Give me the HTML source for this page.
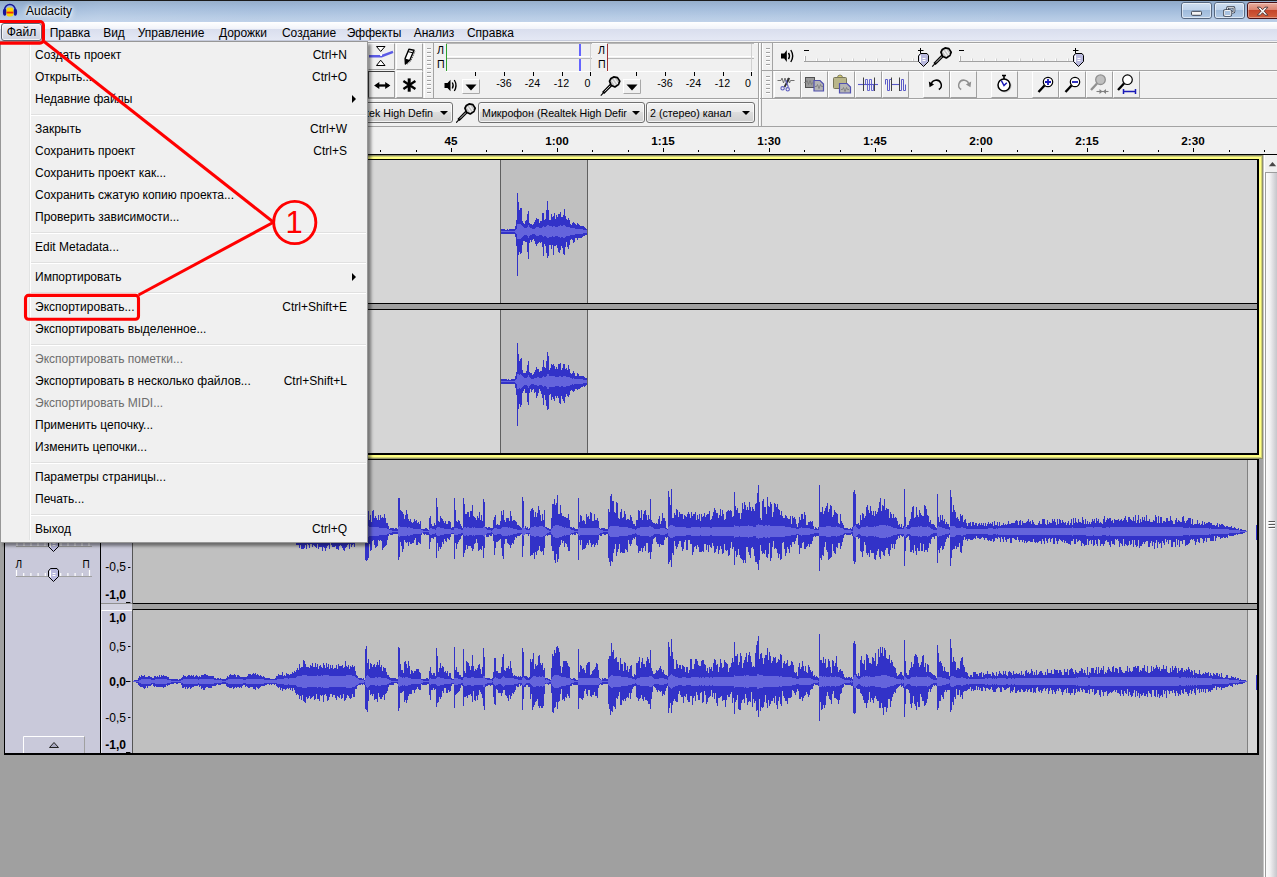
<!DOCTYPE html>
<html lang="ru">
<head>
<meta charset="utf-8">
<title>Audacity</title>
<style>
*{box-sizing:border-box;margin:0;padding:0}
html,body{width:1277px;height:877px;overflow:hidden;background:#a0a0a0}
body{position:relative;font-family:"Liberation Sans",sans-serif;font-size:12px;color:#000}
.abs{position:absolute}
#title{position:absolute;left:0;top:0;width:1277px;height:22px;background:linear-gradient(180deg,#8fa9c8 0,#9cb7d8 30%,#b2c8e3 75%,#bccfe8 100%);border-top:1px solid #1a1a1a}
#title .streak{position:absolute;left:0;top:0;width:1277px;height:21px;background:linear-gradient(100deg,rgba(255,255,255,0) 0,rgba(255,255,255,.0) 3%,rgba(255,255,255,.12) 8%,rgba(255,255,255,.05) 20%,rgba(255,255,255,.08) 40%,rgba(255,255,255,.05) 60%,rgba(255,255,255,.0) 82%,rgba(255,255,255,.0) 100%)}
#title .cap{position:absolute;left:26px;top:3px;font-size:12px;line-height:15px;color:#000;text-shadow:0 0 6px #fff,0 0 6px #fff,0 0 3px #fff}
#menubar{position:absolute;left:0;top:22px;width:1277px;height:20px;background:linear-gradient(180deg,#ffffff 0,#f1f3f9 36%,#d9deee 37%,#e4e8f4 94.500%,#c6cbdc 95%,#c6cbdc 100%);border-bottom:1px solid #f3f3f3}
#menubar span{position:absolute;top:2.500px;height:17px;line-height:16px;text-align:center;font-size:12px;white-space:nowrap}
#menubar span.sel{border:1px solid #5e6573;border-radius:3px;background:linear-gradient(180deg,#f0f1f6 0,#dadde8 50%,#cdd1de 100%);box-shadow:inset 0 0 0 1px rgba(255,255,255,.7)}
#tb{position:absolute;left:0;top:42px;width:1277px;height:85px;background:#f0f0f0}
.hl{position:absolute;left:0;width:1277px;height:2px;background:linear-gradient(180deg,#a3a3a3 0,#a3a3a3 50%,#fafafa 50%,#fafafa 100%)}
.vl{position:absolute;width:1px;background:#a3a3a3}
.btn{position:absolute;width:27px;height:27px;background:#f0f0f0;border-top:1px solid #fff;border-left:1px solid #fff;border-right:1px solid #a0a0a0;border-bottom:1px solid #a0a0a0}
.btn svg{position:absolute;left:-1px;top:-1px}
.btn.t svg{left:-2px;top:-1px}
.grab{position:absolute;width:10px;background:#f0f0f0;border-left:1px solid #fff;border-right:1px solid #a3a3a3}
.grab i{position:absolute;left:2px;top:5px;width:4px;bottom:3px;background:repeating-linear-gradient(180deg,#a0a0a0 0,#a0a0a0 1px,#fff 1px,#fff 2px,#f0f0f0 2px,#f0f0f0 4px)}
.combo{position:absolute;top:102px;height:21px;border:1px solid #707070;border-radius:3px;background:linear-gradient(180deg,#f2f2f2 0,#ebebeb 45%,#dddddd 50%,#cfcfcf 100%);font-size:10.67px;line-height:20px;white-space:nowrap;overflow:hidden;padding-left:3px;box-shadow:inset 0 0 0 1px rgba(255,255,255,.75)}
.combo i{position:absolute;right:4px;top:8px;width:0;height:0;border-left:4px solid transparent;border-right:4px solid transparent;border-top:4.500px solid #000}
.mlab{position:absolute;font-size:10.67px;line-height:12px;white-space:nowrap}
.mbar{position:absolute;height:14px;background:#f0f0f0;border-top:1px solid #b8b8b8;border-bottom:1px solid #fff}
#ruler{position:absolute;left:0;top:127px;width:1277px;height:27px;background:#f0f0f0}
#ruler span{position:absolute;top:6.800px;width:40px;margin-left:-20px;text-align:center;font-weight:bold;font-size:11.700px;line-height:13px}
#menu{position:absolute;left:0;top:41px;width:368px;height:502px;background:#f0f0f0;border:1px solid #979797;box-shadow:3px 3px 3px rgba(0,0,0,.45)}
#menu .gut{position:absolute;left:28px;top:2px;width:2px;height:496px;border-left:1px solid #e2e3e3;border-right:1px solid #fff}
#menu .it{position:absolute;left:34px;height:22px;line-height:23px;font-size:12px;white-space:nowrap}
#menu .sc{position:absolute;right:20px;height:22px;line-height:23px;font-size:12px;white-space:nowrap;text-align:right}
#menu .dis{color:#6d6d6d}
#menu .sep{position:absolute;left:30px;width:335px;height:2px;border-top:1px solid #e0e0e0;border-bottom:1px solid #fff}
#menu .arr{position:absolute;left:351px;width:0;height:0;border-top:4px solid transparent;border-bottom:4px solid transparent;border-left:4px solid #000}
.vr{position:absolute;font-size:12px;line-height:12px;width:26px;text-align:right;white-space:nowrap}
.vr.b{font-weight:bold}
</style>
</head>
<body>
<svg width="0" height="0" style="position:absolute"><defs>
<g id="mic">
<path d="M0.200 19.700 L3.200 16.400" stroke="#000" stroke-width="1.100"/>
<path d="M2.500 17 L10.800 8.700" stroke="#000" stroke-width="3.100"/>
<path d="M3.900 15.600 L10.300 9.200" stroke="#e4e4e4" stroke-width=".9"/>
<path d="M10.300 2.500 L13.100 0.900 L16.900 1.600 L19.200 5.100 L17.800 8.600 L14.300 11 L10.500 9.300 L8.900 5.100z" fill="#c4c4c4" stroke="#000" stroke-width="1.700" stroke-linejoin="round"/>
<path d="M11.300 4 L14.800 9.200 M13.600 2.600 L17.200 7.900" stroke="#f2f2f2" stroke-width="1.300"/>
</g>
<g id="thumb">
<path d="M0.500 3 L2.500 0.500 H9 L10.500 2.500 V8.500 L5.500 13.500 L0.500 8.500z" fill="#b9b9de" stroke="#000" stroke-width="1"/>
<path d="M1.500 3.200 L3 1.500 V10 L1.500 8.300z" fill="#fff"/>
<path d="M4.500 5.500 h3 M4.500 7.500 h3" stroke="#fff" stroke-width="1"/>
</g>
</defs></svg>
<!-- title bar -->
<div id="title"><div class="streak"></div>
<svg class="abs" style="left:0;top:-1px" width="22" height="22" viewBox="0 0 22 22">
<path d="M4.600 11 V9.700 a5.300 5.300 0 0 1 10.600 0 V11" fill="none" stroke="#15159a" stroke-width="1.500"/>
<ellipse cx="4.700" cy="12.100" rx="1.800" ry="3.700" fill="#15159a"/>
<ellipse cx="15.300" cy="12.100" rx="1.800" ry="3.700" fill="#15159a"/>
<rect x="6.600" y="7.400" width="6.700" height="9" rx="2.200" fill="#fdd400"/>
<rect x="6.600" y="11.200" width="6.700" height="2.700" fill="#f79a00"/>
<rect x="6.600" y="11.900" width="6.700" height="1.300" fill="#f02a10"/>
</svg>
<div class="cap">Audacity</div>
<!-- window buttons -->
<svg class="abs" style="left:1180px;top:0" width="97" height="21" viewBox="0 0 97 21">
<defs>
<linearGradient id="gb" x1="0" y1="0" x2="0" y2="1"><stop offset="0" stop-color="#cfdff1"/><stop offset=".48" stop-color="#bdd1e9"/><stop offset=".5" stop-color="#9fbbdb"/><stop offset="1" stop-color="#b4cbe6"/></linearGradient>
<linearGradient id="gr" x1="0" y1="0" x2="0" y2="1"><stop offset="0" stop-color="#e9b0a2"/><stop offset=".48" stop-color="#d9816c"/><stop offset=".5" stop-color="#c4452a"/><stop offset="1" stop-color="#d2623f"/></linearGradient>
</defs>
<rect x="1.5" y="1.5" width="30" height="16" rx="2.5" fill="url(#gb)" stroke="#56677f"/>
<rect x="2.5" y="2.5" width="28" height="14" rx="1.5" fill="none" stroke="rgba(255,255,255,.55)"/>
<rect x="34.5" y="1.5" width="30" height="16" rx="2.5" fill="url(#gb)" stroke="#56677f"/>
<rect x="35.5" y="2.5" width="28" height="14" rx="1.5" fill="none" stroke="rgba(255,255,255,.55)"/>
<rect x="67.5" y="1.5" width="40" height="16" rx="2.5" fill="url(#gr)" stroke="#4a1216"/>
<rect x="68.5" y="2.5" width="38" height="14" rx="1.5" fill="none" stroke="rgba(255,255,255,.35)"/>
<rect x="11.500" y="10.300" width="10" height="4" rx="1" fill="#f4f4f4" stroke="#3a4250" stroke-width="1"/>
<rect x="47.500" y="6.300" width="6.500" height="5" rx=".8" fill="none" stroke="#3a4250" stroke-width="2.6"/>
<rect x="47.500" y="6.300" width="6.500" height="5" rx=".8" fill="none" stroke="#f4f4f4" stroke-width="1"/>
<rect x="44.300" y="9.500" width="6.500" height="5" rx=".8" fill="#a9c2df" stroke="#3a4250" stroke-width="2.6"/>
<rect x="44.300" y="9.500" width="6.500" height="5" rx=".8" fill="#a9c2df" stroke="#f4f4f4" stroke-width="1"/>
<path d="M77.300 6.200 l3 0 l2.300 2.500 l2.300 -2.500 l3 0 l-3.700 4 l3.700 4 l-3 0 l-2.300 -2.500 l-2.300 2.500 l-3 0 l3.700 -4z" fill="#f6f6f6" stroke="#4a3030" stroke-width=".9"/>
</svg>
</div>
<!-- menubar -->
<div id="menubar">
<span class="sel" style="left:1px;width:41px;top:1px;height:18px">Файл</span>
<span style="left:45px;width:50px">Правка</span>
<span style="left:98px;width:32px">Вид</span>
<span style="left:131px;width:80px">Управление</span>
<span style="left:211px;width:64px">Дорожки</span>
<span style="left:276px;width:66px">Создание</span>
<span style="left:342px;width:64px">Эффекты</span>
<span style="left:407px;width:54px">Анализ</span>
<span style="left:461px;width:59px">Справка</span>
</div>
<!-- toolbars background -->
<div id="tb"></div>
<div class="hl" style="top:42px"></div>
<div class="hl" style="top:70px;left:762px;width:515px"></div>
<div class="hl" style="top:98px"></div>
<div class="hl" style="top:126px"></div>
<div class="vl" style="left:422px;top:43px;height:55px"></div>
<div class="vl" style="left:758px;top:43px;height:83px"></div>
<div class="vl" style="left:759px;top:43px;height:83px;background:#fff"></div>
<div class="vl" style="left:761px;top:43px;height:83px"></div>
<!-- tools toolbar buttons -->
<div class="btn t" style="left:368px;top:43px"><svg width="27" height="27" viewBox="0 0 27 27">
<path d="M9.500 3.500 H18 L13.700 8.500z M9.500 22.500 H18 L13.700 17.200z" fill="#fff" stroke="#000" stroke-width="1"/>
<path d="M2 13.200 H14.500 L26 8.800" fill="none" stroke="#5a5ae6" stroke-width="2.500"/>
<rect x="13.100" y="11" width="1.900" height="1.900" fill="#fff"/></svg></div>
<div class="btn t" style="left:396px;top:43px"><svg width="27" height="27" viewBox="0 0 27 27">
<path d="M19.900 8.600 L15.800 18 L11.600 21.600" fill="none" stroke="#444" stroke-width="1" stroke-dasharray="1 1"/>
<path d="M13.900 6.200 L19 7.300 L14.900 16.900 L10.400 21 L10.100 15.500z" fill="#fff" stroke="#000" stroke-width="1.400" stroke-linejoin="round"/>
<path d="M10.100 15.500 L14.900 16.900 L10.400 21z" fill="#000"/>
<path d="M12.900 8.600 L17.900 9.800" stroke="#000" stroke-width="1"/></svg></div>
<div class="btn t" style="left:368px;top:71px;border-top-color:#404040;border-left-color:#404040"><svg width="27" height="27" viewBox="0 0 27 27">
<path d="M9 14.500 H21.500" stroke="#000" stroke-width="2.300"/><path d="M7.100 14.500 l5.200 -3.500 v7z M23.400 14.500 l-5.200 -3.500 v7z" fill="#000"/></svg></div>
<div class="btn t" style="left:396px;top:71px"><svg width="27" height="27" viewBox="0 0 27 27">
<path d="M14.200 7.400 V20.700" stroke="#000" stroke-width="3"/><path d="M8.400 10.100 L20.400 18 M20.400 10.100 L8.400 18" stroke="#000" stroke-width="2.400" fill="none"/></svg></div>
<!-- meter toolbar -->
<div class="grab" style="left:424px;top:43px;height:55px"><i style="left:2px"></i></div>
<div class="mlab" style="left:437px;top:44px">Л</div>
<div class="mlab" style="left:437px;top:58px">П</div>
<div class="mbar" style="left:446px;top:43px;width:146px"></div>
<div class="mbar" style="left:446px;top:58px;width:146px"></div>
<div class="abs" style="left:446px;top:44px;width:1px;height:27px;background:#2ca02c"></div>
<div class="abs" style="left:579px;top:44px;width:2px;height:12px;background:#6464ff"></div>
<div class="abs" style="left:579px;top:59px;width:2px;height:12px;background:#6464ff"></div>
<div class="abs" style="left:590px;top:44px;width:1px;height:27px;background:#d0d0d0"></div>
<svg class="abs" style="left:440px;top:72px" width="320" height="26" viewBox="0 0 320 26">
<g stroke="#000" stroke-width="1"><path d="M35.500 0v4M64.500 0v4M93.500 0v4M122.500 0v4M150.500 0v4"/>
<path d="M196.500 0v4M225.500 0v4M254.500 0v4M283.500 0v4M311.500 0v4"/></g>
<g font-family="Liberation Sans, sans-serif" font-size="10.670" fill="#000" text-anchor="middle">
<text x="64" y="15">-36</text><text x="92.500" y="15">-24</text><text x="121.500" y="15">-12</text><text x="147.500" y="15">0</text>
<text x="225" y="15">-36</text><text x="253.500" y="15">-24</text><text x="282.500" y="15">-12</text><text x="308" y="15">0</text></g>
<!-- speaker -->
<path d="M4.500 11 h3 l3 -3.300 v11.600 l-3 -3.300 h-3z" fill="#000"/>
<path d="M12.300 10.500 q1.800 3 0 6 M14.300 8 q3.400 5.500 0 11" fill="none" stroke="#000" stroke-width="1.300"/>
<!-- dropdown btn -->
<rect x="22.500" y="7.500" width="17" height="14" fill="#f0f0f0" stroke="#fff"/><path d="M22.500 21.500 h17 v-14" fill="none" stroke="#a8a8a8"/>
<path d="M25.500 12.500 h11 l-5.500 6z" fill="#000"/>
<rect x="183.500" y="7.500" width="17" height="14" fill="#f0f0f0" stroke="#fff"/><path d="M183.500 21.500 h17 v-14" fill="none" stroke="#a8a8a8"/>
<path d="M186.500 12.500 h11 l-5.500 6z" fill="#000"/>
<!-- mic icon -->
<g transform="translate(160.600,4)"><use href="#mic"/></g>
</svg>
<div class="mlab" style="left:598px;top:44px">Л</div>
<div class="mlab" style="left:598px;top:58px">П</div>
<div class="mbar" style="left:607px;top:43px;width:147px"></div>
<div class="mbar" style="left:607px;top:58px;width:147px"></div>
<div class="abs" style="left:607px;top:44px;width:1px;height:27px;background:#a03030"></div>
<div class="abs" style="left:751px;top:44px;width:1px;height:27px;background:#d0d0d0"></div>
<!-- mixer toolbar -->
<div class="grab" style="left:762px;top:43px;height:27px;width:11px"><i style="left:3px"></i></div>
<svg class="abs" style="left:775px;top:43px" width="320" height="27" viewBox="0 0 320 27">
<path d="M6 10.500 h3.200 l2.600 -3.600 v12.200 l-2.600 -3.600 h-3.200z" fill="#000"/>
<path d="M13.500 9.800 q2 3.200 0 6.400 M15.800 7 q3.800 6 0 12" fill="none" stroke="#000" stroke-width="1.400"/>
<path d="M29 7.500 h5" stroke="#000"/>
<path d="M143 7.500 h5.500 M145.500 5 v5.500" stroke="#000"/>
<path d="M29 18.500 h118" stroke="#a0a0a0"/>
<path d="M29.500 13 v5" stroke="#fff"/><path d="M30.500 13 v5" stroke="#b0b0b0"/>
<g stroke="#fff"><path d="M41.500 15.500v2.500M53.500 15.500v2.500M65.500 15.500v2.500M77.500 15.500v2.500M89.500 15.500v2.500M101.500 15.500v2.500M113.500 15.500v2.500M125.500 15.500v2.500M137.500 15.500v2.500"/></g>
<g stroke="#d0d0d0"><path d="M42.500 15.500v2.500M54.500 15.500v2.500M66.500 15.500v2.500M78.500 15.500v2.500M90.500 15.500v2.500M102.500 15.500v2.500M114.500 15.500v2.500M126.500 15.500v2.500M138.500 15.500v2.500"/></g>
<use href="#thumb" x="143" y="10"/>
<g transform="translate(157,4)"><use href="#mic"/></g>
<path d="M184 7.500 h5" stroke="#000"/>
<path d="M298 7.500 h5.500 M300.500 5 v5.500" stroke="#000"/>
<path d="M184 18.500 h118" stroke="#a0a0a0"/>
<path d="M184.500 13 v5" stroke="#fff"/><path d="M185.500 13 v5" stroke="#b0b0b0"/>
<g stroke="#fff"><path d="M196.500 15.500v2.500M208.500 15.500v2.500M220.500 15.500v2.500M232.500 15.500v2.500M244.500 15.500v2.500M256.500 15.500v2.500M268.500 15.500v2.500M280.500 15.500v2.500M292.500 15.500v2.500"/></g>
<g stroke="#d0d0d0"><path d="M197.500 15.500v2.500M209.500 15.500v2.500M221.500 15.500v2.500M233.500 15.500v2.500M245.500 15.500v2.500M257.500 15.500v2.500M269.500 15.500v2.500M281.500 15.500v2.500M293.500 15.500v2.500"/></g>
<use href="#thumb" x="298" y="10"/>
</svg>
<!-- edit toolbar -->
<div class="grab" style="left:762px;top:71px;height:27px;width:11px"><i style="left:3px"></i></div>
<!-- edit toolbar buttons -->
<div class="btn" style="left:774px;top:71px"><svg width="27" height="27" viewBox="0 0 27 27">
<path d="M3.500 9.500 h3.500 l1 -2.500 l1.500 5 l1.500 -5 l1.500 5 l1.500 -5 l1.500 5 l1 -2.500 h4" fill="none" stroke="#707070" stroke-width="1"/>
<path d="M15.300 7 l-4.800 9" stroke="#303030" stroke-width="1.800"/><path d="M11.800 9 l2.500 7" stroke="#6060c0" stroke-width="1.100"/>
<circle cx="8.600" cy="17.300" r="1.700" fill="#f0f0f0" stroke="#6060c0" stroke-width="1.100"/>
<circle cx="13.700" cy="18.300" r="1.700" fill="#f0f0f0" stroke="#6060c0" stroke-width="1.100"/></svg></div>
<div class="btn" style="left:801px;top:71px"><svg width="27" height="27" viewBox="0 0 27 27">
<rect x="4.500" y="6.500" width="9" height="10" fill="#9a9a9a" stroke="#505050"/>
<path d="M3 11.500 h2 l1 -2 l1.500 4 l1.500 -4 l1.500 4 l1 -2" fill="none" stroke="#777" stroke-width=".8"/>
<path d="M13 9.500 h6 l3.500 3.500 v7 h-9.500z" fill="#b4b4b4" stroke="#5050b0" stroke-width="1.200"/>
<path d="M14 15.500 h1.500 l1 -2 l1.500 4 l1.500 -4 l1 2 h1.500" fill="none" stroke="#777" stroke-width=".8"/></svg></div>
<div class="btn" style="left:828px;top:71px"><svg width="27" height="27" viewBox="0 0 27 27">
<rect x="5.500" y="6.500" width="13" height="11" rx="1" fill="#b9b68a" stroke="#77755a"/>
<path d="M9.500 6.500 q0 -2.500 2.500 -2.500 q2.500 0 2.500 2.500z" fill="#d8cf70" stroke="#77755a" stroke-width=".9"/>
<path d="M11.500 12.500 h7.500 l3.500 3.500 v6 h-11z" fill="#b4b4b4" stroke="#5050b0" stroke-width="1.200"/>
<path d="M13 18.500 h1.500 l1 -2 l1.500 4 l1.500 -4 l1 2 h1.500" fill="none" stroke="#777" stroke-width=".8"/></svg></div>
<div class="btn" style="left:855px;top:71px"><svg width="27" height="27" viewBox="0 0 27 27">
<path d="M3 13.500 H23" stroke="#5a5ac8" stroke-width="1.100"/>
<path d="M8.500 13.500 H10.500 V8.500 H12.500 V19.500 H14.500 V8.500 H16.500 V19.500 H18.500 V13.500" fill="none" stroke="#5a5ac8" stroke-width=".9"/>
<path d="M8.500 6.500 v13.500 M19.500 6.500 v13.500" stroke="#404040" stroke-width="1"/></svg></div>
<div class="btn" style="left:882px;top:71px"><svg width="27" height="27" viewBox="0 0 27 27">
<path d="M9.500 13.500 H17.500" stroke="#5a5ac8" stroke-width="1.100"/>
<path d="M3.500 13.500 V8.500 H5.500 V19.500 H7.500 V8.500 H9.500 M17.500 19.500 H19.500 V8.500 H21.500 V19.500 H23.500 V13.500" fill="none" stroke="#5a5ac8" stroke-width="1"/>
<path d="M9.500 6.500 v13.500 M17.500 6.500 v13.500" stroke="#404040" stroke-width="1"/></svg></div>
<div class="btn" style="left:923px;top:71px"><svg width="27" height="27" viewBox="0 0 27 27">
<path d="M8.300 14.200 a5 5 0 1 1 7.500 4.300" fill="none" stroke="#000" stroke-width="1.500"/>
<path d="M5.800 10.600 l0.700 5.600 l4.600 -2.800z" fill="#000"/></svg></div>
<div class="btn" style="left:950px;top:71px"><svg width="27" height="27" viewBox="0 0 27 27">
<path d="M18.700 14.200 a5 5 0 1 0 -7.500 4.300" fill="none" stroke="#909090" stroke-width="1.500"/>
<path d="M21.200 10.600 l-0.700 5.600 l-4.600 -2.800z" fill="#909090"/></svg></div>
<div class="btn" style="left:991px;top:71px"><svg width="27" height="27" viewBox="0 0 27 27">
<circle cx="14" cy="15" r="6.500" fill="#999" opacity=".5"/>
<circle cx="13" cy="14" r="6" fill="#fff" stroke="#000" stroke-width="1.500"/>
<path d="M11 4.500 h4 M13 4.500 v3.500" stroke="#000" stroke-width="1.600"/>
<path d="M10.300 9.500 l2.700 5 l2.800 -2.800" fill="none" stroke="#1a1ab8" stroke-width="1.500"/></svg></div>
<div class="btn" style="left:1032px;top:71px"><svg width="27" height="27" viewBox="0 0 27 27">
<path d="M12.500 14.500 l-6 6.500" stroke="#000" stroke-width="2.400"/>
<circle cx="16" cy="11" r="4.700" fill="#fff" stroke="#000" stroke-width="1.200"/>
<path d="M13 11 h6 M16 8 v6" stroke="#1a1ab8" stroke-width="1.800"/></svg></div>
<div class="btn" style="left:1059px;top:71px"><svg width="27" height="27" viewBox="0 0 27 27">
<path d="M12.500 14.500 l-6 6.500" stroke="#000" stroke-width="2.400"/>
<circle cx="16" cy="11" r="4.700" fill="#fff" stroke="#000" stroke-width="1.200"/>
<path d="M13 11 h6" stroke="#1a1ab8" stroke-width="1.800"/></svg></div>
<div class="btn" style="left:1086px;top:71px"><svg width="27" height="27" viewBox="0 0 27 27">
<path d="M11 12.500 l-6 6.500" stroke="#909090" stroke-width="2.400"/>
<circle cx="14.500" cy="8.700" r="4.800" fill="#c0c0c0" stroke="#909090" stroke-width="1.300"/>
<path d="M10.500 20.500 h12" stroke="#808080" stroke-width="1.100"/><path d="M16.500 20.500 l-3 -2.500 v5z M17 20.500 l3 -2.500 v5z" fill="#808080"/></svg></div>
<div class="btn" style="left:1113px;top:71px"><svg width="27" height="27" viewBox="0 0 27 27">
<path d="M11 12.500 l-6 6.500" stroke="#000" stroke-width="2.400"/>
<circle cx="14.500" cy="8.700" r="4.800" fill="#fff" stroke="#000" stroke-width="1.200"/>
<path d="M10.500 20.500 h12 M10.500 18 v5 M22.500 18 v5" stroke="#1a1ab8" stroke-width="1.500" fill="none"/></svg></div>
<!-- device toolbar -->
<div class="combo" style="left:300px;width:153px"><span style="position:absolute;right:19px;top:0">Динамики (Realtek High Defin</span><i></i></div>
<svg class="abs" style="left:455.700px;top:103.300px" width="20" height="20" viewBox="0 0 20 20"><use href="#mic"/></svg>
<div class="combo" style="left:478px;width:167px">Микрофон (Realtek High Defir<i></i></div>
<div class="combo" style="left:646px;width:109px">2 (стерео) канал<i></i></div>
<div id="ruler">
<svg class="abs" style="left:0;top:0" width="1277" height="27" viewBox="0 0 1277 27"><path d="
M133.5 21v4M168.5 23v2M203.5 23v2M239.5 21v4M274.5 23v2M310.5 23v2M345.5 21v4M380.5 23v2M416.5 23v2M451.5 21v4M486.5 23v2M522.5 23v2M557.5 21v4M592.5 23v2M628.5 23v2M663.5 21v4M698.5 23v2M734.5 23v2M769.5 21v4M804.5 23v2M840.5 23v2M875.5 21v4M911.5 23v2M946.5 23v2M981.5 21v4M1017.5 23v2M1052.5 23v2M1087.5 21v4M1123.5 23v2M1158.5 23v2M1193.5 21v4M1229.5 23v2M1264.5 23v2
" stroke="#000" stroke-width="1" fill="none"/></svg>
<span style="left:133px">0</span>
<span style="left:239px">15</span>
<span style="left:345px">30</span>
<span style="left:451px">45</span>
<span style="left:557px">1:00</span>
<span style="left:663px">1:15</span>
<span style="left:769px">1:30</span>
<span style="left:875px">1:45</span>
<span style="left:981px">2:00</span>
<span style="left:1087px">2:15</span>
<span style="left:1193px">2:30</span>
</div>
<!-- ruler bottom line -->
<div class="abs" style="left:0;top:153.700px;width:1277px;height:1.300px;background:#000"></div>
<div class="abs" style="left:0;top:127px;width:5px;height:26px;background:#f0f0f0"></div>
<!-- track 1 focus border (yellow) -->
<div class="abs" style="left:1px;top:155px;width:1262px;height:304px;background:#90906c"></div>
<div class="abs" style="left:2px;top:156px;width:1260px;height:302px;background:#cfcf74"></div>
<div class="abs" style="left:3px;top:157px;width:1258px;height:299.500px;background:#ffff84"></div>
<!-- track 1 -->
<div class="abs" style="left:4px;top:159px;width:1255px;height:296px;background:#000"></div>
<div class="abs" style="left:5px;top:160px;width:95px;height:293px;background:#c9c9da"></div>
<div class="abs" style="left:101px;top:160px;width:31px;height:293px;background:#c9c9da"></div>
<div class="abs" style="left:132px;top:160px;width:1px;height:293px;background:#787878"></div>
<div class="abs" style="left:133px;top:160px;width:1124px;height:143px;background:#d6d6d6"></div>
<div class="abs" style="left:133px;top:310px;width:1124px;height:143px;background:#d6d6d6"></div>
<div class="abs" style="left:101px;top:304px;width:1156px;height:5px;background:#a0a0a0"></div>
<div class="abs" style="left:500px;top:160px;width:88px;height:143px;background:#c0c0c0;border-left:1px solid #606060;border-right:1px solid #606060"></div>
<div class="abs" style="left:500px;top:310px;width:88px;height:143px;background:#c0c0c0;border-left:1px solid #606060;border-right:1px solid #606060"></div>
<!-- track 2 -->
<div class="abs" style="left:4px;top:459px;width:1255px;height:296px;background:#000"></div>
<div class="abs" style="left:5px;top:460px;width:95px;height:293px;background:#c9c9da"></div>
<div class="abs" style="left:101px;top:460px;width:31px;height:143px;background:#c9c9da"></div>
<div class="abs" style="left:101px;top:603px;width:31px;height:7px;background:#d2d2e0;border-top:1px solid #909090"></div>
<div class="abs" style="left:101px;top:610px;width:31px;height:143px;background:#c9c9da;border-top:1px solid #fff;border-left:1px solid #e8e8f0"></div>
<div class="abs" style="left:132px;top:460px;width:1px;height:293px;background:#555"></div>
<div class="abs" style="left:133px;top:460px;width:1124px;height:143px;background:#c0c0c0"></div>
<div class="abs" style="left:133px;top:610px;width:1124px;height:143px;background:#c0c0c0"></div>
<div class="abs" style="left:132px;top:604px;width:1125px;height:5px;background:#a0a0a0"></div>
<div class="abs" style="left:1247px;top:460px;width:10px;height:143px;background:#d6d6d6;border-left:1px solid #808080"></div>
<div class="abs" style="left:1247px;top:610px;width:10px;height:143px;background:#d6d6d6;border-left:1px solid #808080"></div>
<div class="abs" style="left:1256px;top:525px;width:1px;height:15px;background:#3232c8"></div>
<div class="abs" style="left:1256px;top:675px;width:1px;height:15px;background:#3232c8"></div>
<!-- vruler labels -->
<div class="vr" style="left:100px;top:561px">-0,5</div>
<div class="vr b" style="left:100px;top:589px">-1,0</div>
<div class="vr b" style="left:100px;top:612px">1,0</div>
<div class="vr" style="left:100px;top:641px">0,5</div>
<div class="vr b" style="left:100px;top:676px">0,0</div>
<div class="vr" style="left:100px;top:712px">-0,5</div>
<div class="vr b" style="left:100px;top:739px">-1,0</div>
<svg class="abs" style="left:101px;top:460px" width="32" height="294" viewBox="0 0 32 294"><path d="M27 107.500h2.400 M25 142.500h4.400 M27 186.500h2.400 M25 221.500h4.400 M27 257.500h2.400 M25 292.500h4.400" stroke="#000" stroke-width="1"/></svg>
<!-- track 2 panel controls -->
<svg class="abs" style="left:5px;top:540px" width="95" height="214" viewBox="0 0 95 214">
<g font-family="Liberation Sans, sans-serif" font-size="10" fill="#000"><text x="10.500" y="28">Л</text><text x="77.500" y="28">П</text></g>
<path d="M11 6.500h76 M11 36.500h76" stroke="#a0a0a0"/>
<g stroke="#fff" stroke-width="1.200"><path d="M11.500 30v6M18.700 33v3M25.900 33v3M33.100 33v3M40.300 33v3M55.700 33v3M62.900 33v3M70.100 33v3M77.300 33v3M84.500 30v6"/>
<path d="M12 3v3M19 3v3M26 3v3M33 3v3M40 3v3M56 3v3M63 3v3M70 3v3M77 3v3M84 3v3"/></g>
<use href="#thumb" x="43" y="-2"/>
<use href="#thumb" x="43" y="28"/>
<path d="M18.500 213 V196.500 H79.500" fill="none" stroke="#fff"/>
<path d="M79.500 196.500 V213" stroke="#a0a0a0"/>
<path d="M44.500 207.500 h9 l-4.500 -5z" fill="#a8a8c0" stroke="#202020" stroke-width="1"/>
</svg>
<svg class="abs" style="left:0;top:154px" width="1277" height="723" viewBox="0 154 1277 723" shape-rendering="crispEdges">
<path d="M501 229V229H502V229H503V229H504V229H505V230H506V230H507V229H508V230H509V229H510V229H511V229H512V229H513V229H514V229H515V226H516V220H517V193H518V202H519V210H520V208H521V208H522V221H523V223H524V224H525V221H526V220H527V214H528V211H529V223H530V224H531V224H532V225H533V224H534V222H535V220H536V218H537V219H538V219H539V223H540V221H541V221H542V213H543V213H544V220H545V219H546V210H547V201H548V210H549V220H550V220H551V214H552V217H553V216H554V213H555V219H556V215H557V217H558V214H559V214H560V212H561V217H562V217H563V215H564V209H565V216H566V219H567V220H568V218H569V220H570V224H571V225H572V223H573V222H574V223H575V224H576V225H577V223H578V224H579V225H580V226H581V226H582V226H583V226H584V227H585V228H586V229H587V235H586V235H585V236H584V236H583V237H582V238H581V238H580V238H579V238H578V240H577V238H576V238H575V242H574V243H573V240H572V239H571V240H570V245H569V249H568V247H567V242H566V247H565V255H564V254H563V248H562V246H561V250H560V253H559V252H558V248H557V245H556V246H555V246H554V255H553V245H552V249H551V245H550V245H549V256H548V258H547V253H546V246H545V244H544V256H543V247H542V242H541V243H540V242H539V243H538V244H537V246H536V244H535V241H534V239H533V240H532V242H531V240H530V243H529V259H528V252H527V242H526V242H525V241H524V241H523V245H522V253H521V254H520V252H519V255H518V276H517V246H516V237H515V234H514V234H513V234H512V234H511V234H510V234H509V234H508V234H507V234H506V234H505V234H504V234H503V234H502V234H501Z" fill="#3232c8"/><path d="M501 231V231H502V231H503V231H504V231H505V231H506V231H507V231H508V231H509V231H510V231H511V231H512V231H513V231H514V231H515V230H516V229H517V224H518V224H519V224H520V224H521V225H522V226H523V227H524V228H525V228H526V228H527V227H528V225H529V227H530V228H531V228H532V229H533V229H534V229H535V228H536V227H537V227H538V227H539V228H540V228H541V228H542V227H543V226H544V227H545V227H546V226H547V225H548V225H549V226H550V226H551V226H552V227H553V226H554V226H555V227H556V227H557V227H558V226H559V226H560V225H561V226H562V226H563V225H564V225H565V226H566V227H567V227H568V227H569V227H570V228H571V228H572V228H573V228H574V228H575V229H576V229H577V229H578V229H579V229H580V229H581V229H582V229H583V230H584V230H585V230H586V230H587V233H586V233H585V233H584V233H583V234H582V234H581V234H580V234H579V234H578V234H577V234H576V234H575V235H574V235H573V235H572V235H571V235H570V236H569V236H568V236H567V236H566V237H565V238H564V238H563V237H562V237H561V238H560V237H559V237H558V236H557V236H556V236H555V237H554V237H553V236H552V237H551V237H550V237H549V238H548V238H547V237H546V236H545V236H544V237H543V236H542V235H541V235H540V235H539V236H538V236H537V236H536V235H535V234H534V234H533V234H532V235H531V235H530V236H529V238H528V236H527V235H526V235H525V235H524V236H523V237H522V238H521V239H520V239H519V239H518V239H517V234H516V233H515V232H514V232H513V232H512V232H511V232H510V232H509V232H508V232H507V232H506V232H505V232H504V232H503V232H502V232H501Z" fill="#6464dc"/>
<path d="M501 379V379H502V379H503V379H504V379H505V379H506V379H507V380H508V379H509V380H510V380H511V379H512V379H513V379H514V379H515V376H516V372H517V343H518V354H519V361H520V359H521V358H522V370H523V373H524V373H525V373H526V371H527V365H528V361H529V372H530V373H531V373H532V375H533V374H534V372H535V370H536V367H537V369H538V369H539V372H540V371H541V371H542V367H543V360H544V367H545V368H546V361H547V352H548V356H549V370H550V368H551V364H552V365H553V364H554V366H555V369H556V367H557V369H558V364H559V364H560V363H561V370H562V368H563V364H564V364H565V369H566V368H567V370H568V365H569V369H570V373H571V374H572V373H573V371H574V373H575V376H576V376H577V373H578V374H579V376H580V376H581V376H582V376H583V376H584V377H585V378H586V378H587V385H586V386H585V387H584V386H583V387H582V387H581V388H580V389H579V389H578V390H577V389H576V389H575V391H574V392H573V391H572V390H571V391H570V395H569V397H568V396H567V394H566V397H565V403H564V401H563V399H562V396H561V404H560V403H559V398H558V396H557V398H556V396H555V401H554V399H553V397H552V400H551V394H550V395H549V409H548V410H547V406H546V400H545V395H544V405H543V398H542V394H541V391H540V389H539V393H538V396H537V398H536V392H535V393H534V389H533V390H532V392H531V389H530V393H529V405H528V402H527V393H526V393H525V389H524V391H523V393H522V405H521V407H520V404H519V409H518V426H517V395H516V388H515V384H514V384H513V384H512V384H511V384H510V384H509V384H508V384H507V384H506V384H505V384H504V384H503V384H502V384H501Z" fill="#3232c8"/><path d="M501 381V381H502V381H503V381H504V381H505V381H506V381H507V381H508V381H509V381H510V381H511V381H512V381H513V381H514V381H515V380H516V379H517V374H518V374H519V375H520V374H521V375H522V376H523V377H524V378H525V378H526V378H527V377H528V375H529V377H530V378H531V379H532V379H533V379H534V378H535V378H536V378H537V377H538V377H539V378H540V378H541V378H542V377H543V376H544V377H545V377H546V376H547V374H548V374H549V376H550V376H551V376H552V376H553V376H554V376H555V377H556V377H557V377H558V377H559V376H560V376H561V377H562V377H563V376H564V376H565V376H566V377H567V377H568V377H569V377H570V378H571V378H572V379H573V378H574V379H575V379H576V379H577V379H578V379H579V379H580V379H581V379H582V379H583V380H584V380H585V380H586V380H587V383H586V383H585V383H584V383H583V384H582V384H581V384H580V384H579V384H578V384H577V384H576V384H575V384H574V385H573V384H572V385H571V385H570V386H569V386H568V386H567V386H566V387H565V387H564V387H563V386H562V386H561V387H560V387H559V386H558V386H557V386H556V386H555V387H554V387H553V387H552V387H551V387H550V387H549V389H548V389H547V387H546V386H545V386H544V387H543V386H542V385H541V385H540V385H539V386H538V386H537V385H536V385H535V385H534V384H533V384H532V384H531V385H530V386H529V388H528V386H527V385H526V385H525V385H524V386H523V387H522V388H521V389H520V388H519V389H518V389H517V384H516V383H515V382H514V382H513V382H512V382H511V382H510V382H509V382H508V382H507V382H506V382H505V382H504V382H503V382H502V382H501Z" fill="#6464dc"/>
<path d="M133 531V531H134V531H135V530H136V530H137V530H138V529H139V526H140V526H141V526H142V526H143V527H144V525H145V527H146V527H147V525H148V526H149V527H150V528H151V528H152V528H153V528H154V526H155V526H156V526H157V527H158V525H159V526H160V525H161V525H162V525H163V525H164V526H165V525H166V526H167V526H168V528H169V529H170V529H171V529H172V529H173V529H174V529H175V529H176V529H177V529H178V529H179V529H180V529H181V528H182V526H183V525H184V526H185V526H186V525H187V525H188V524H189V526H190V525H191V526H192V526H193V526H194V527H195V525H196V526H197V528H198V528H199V528H200V525H201V525H202V525H203V525H204V525H205V524H206V525H207V524H208V525H209V524H210V525H211V525H212V525H213V526H214V528H215V528H216V529H217V528H218V528H219V529H220V529H221V529H222V529H223V529H224V529H225V530H226V528H227V527H228V525H229V527H230V526H231V526H232V524H233V524H234V526H235V525H236V524H237V527H238V524H239V526H240V525H241V525H242V527H243V526H244V527H245V527H246V526H247V526H248V525H249V524H250V524H251V525H252V526H253V526H254V523H255V524H256V523H257V523H258V526H259V525H260V526H261V525H262V526H263V526H264V527H265V527H266V529H267V529H268V529H269V528H270V529H271V528H272V529H273V529H274V529H275V528H276V526H277V525H278V525H279V526H280V523H281V525H282V524H283V524H284V523H285V523H286V525H287V525H288V525H289V523H290V524H291V524H292V523H293V524H294V523H295V521H296V517H297V514H298V516H299V515H300V516H301V519H302V517H303V518H304V511H305V517H306V518H307V518H308V520H309V519H310V520H311V519H312V514H313V520H314V513H315V520H316V514H317V512H318V513H319V518H320V514H321V518H322V516H323V517H324V514H325V516H326V514H327V516H328V516H329V519H330V519H331V514H332V519H333V515H334V518H335V515H336V513H337V515H338V513H339V512H340V512H341V515H342V513H343V513H344V513H345V514H346V514H347V517H348V518H349V516H350V515H351V518H352V518H353V520H354V517H355V521H356V523H357V525H358V527H359V529H360V528H361V528H362V528H363V528H364V530H365V498H366V495H367V516H368V511H369V520H370V515H371V522H372V511H373V510H374V518H375V516H376V518H377V520H378V515H379V520H380V515H381V518H382V517H383V518H384V514H385V518H386V523H387V523H388V526H389V529H390V528H391V528H392V528H393V528H394V529H395V528H396V528H397V529H398V498H399V498H400V510H401V511H402V512H403V514H404V519H405V515H406V510H407V514H408V519H409V521H410V519H411V522H412V523H413V522H414V519H415V521H416V520H417V523H418V522H419V524H420V521H421V529H422V529H423V529H424V529H425V528H426V528H427V529H428V530H429V518H430V516H431V524H432V526H433V526H434V523H435V525H436V498H437V507H438V521H439V522H440V516H441V518H442V519H443V521H444V523H445V521H446V524H447V524H448V521H449V521H450V522H451V528H452V527H453V527H454V498H455V510H456V521H457V522H458V520H459V521H460V524H461V526H462V528H463V498H464V504H465V514H466V514H467V512H468V512H469V517H470V511H471V511H472V505H473V516H474V517H475V518H476V520H477V516H478V518H479V512H480V520H481V515H482V521H483V499H484V502H485V527H486V527H487V528H488V527H489V527H490V528H491V528H492V528H493V520H494V517H495V515H496V525H497V524H498V525H499V525H500V521H501V511H502V515H503V510H504V520H505V522H506V518H507V518H508V518H509V521H510V511H511V516H512V521H513V520H514V520H515V521H516V522H517V525H518V525H519V526H520V527H521V528H522V497H523V501H524V528H525V526H526V528H527V527H528V529H529V528H530V511H531V509H532V508H533V510H534V517H535V512H536V517H537V513H538V506H539V510H540V515H541V521H542V514H543V520H544V510H545V527H546V527H547V528H548V528H549V529H550V529H551V518H552V504H553V504H554V499H555V505H556V503H557V495H558V514H559V514H560V505H561V513H562V516H563V516H564V517H565V517H566V518H567V518H568V514H569V520H570V527H571V527H572V528H573V527H574V528H575V529H576V529H577V529H578V498H579V522H580V515H581V516H582V521H583V520H584V521H585V524H586V514H587V517H588V516H589V519H590V512H591V513H592V521H593V521H594V514H595V520H596V520H597V518H598V521H599V528H600V529H601V528H602V528H603V528H604V528H605V529H606V529H607V529H608V509H609V512H610V496H611V494H612V501H613V501H614V512H615V513H616V502H617V503H618V518H619V519H620V512H621V509H622V518H623V517H624V511H625V514H626V520H627V519H628V519H629V520H630V515H631V517H632V521H633V524H634V524H635V526H636V520H637V520H638V510H639V511H640V518H641V510H642V520H643V514H644V511H645V510H646V515H647V520H648V515H649V519H650V499H651V520H652V522H653V523H654V523H655V524H656V523H657V524H658V519H659V516H660V524H661V521H662V513H663V518H664V518H665V521H666V528H667V529H668V491H669V497H670V505H671V489H672V518H673V518H674V513H675V515H676V509H677V510H678V517H679V512H680V514H681V514H682V514H683V519H684V515H685V516H686V517H687V514H688V512H689V514H690V518H691V512H692V516H693V514H694V514H695V512H696V520H697V515H698V519H699V514H700V521H701V514H702V517H703V516H704V513H705V517H706V515H707V514H708V514H709V511H710V520H711V519H712V516H713V512H714V508H715V510H716V513H717V513H718V518H719V515H720V509H721V516H722V510H723V514H724V520H725V519H726V512H727V511H728V510H729V511H730V510H731V511H732V517H733V516H734V492H735V506H736V510H737V508H738V513H739V513H740V519H741V513H742V503H743V509H744V502H745V505H746V510H747V507H748V510H749V502H750V507H751V511H752V507H753V509H754V511H755V504H756V503H757V493H758V485H759V502H760V518H761V520H762V501H763V499H764V507H765V507H766V514H767V497H768V506H769V507H770V502H771V504H772V517H773V512H774V503H775V504H776V507H777V504H778V509H779V510H780V515H781V511H782V516H783V518H784V518H785V515H786V516H787V518H788V519H789V519H790V516H791V524H792V516H793V518H794V517H795V519H796V524H797V527H798V523H799V517H800V520H801V514H802V514H803V519H804V512H805V515H806V525H807V525H808V522H809V522H810V521H811V522H812V521H813V526H814V529H815V527H816V528H817V529H818V527H819V485H820V512H821V512H822V507H823V514H824V511H825V508H826V506H827V503H828V512H829V509H830V505H831V506H832V517H833V515H834V510H835V512H836V513H837V514H838V523H839V524H840V514H841V521H842V523H843V525H844V528H845V528H846V528H847V528H848V529H849V529H850V528H851V529H852V527H853V492H854V490H855V494H856V524H857V524H858V523H859V525H860V515H861V520H862V513H863V514H864V518H865V516H866V507H867V505H868V510H869V513H870V506H871V511H872V515H873V511H874V516H875V511H876V514H877V512H878V508H879V502H880V498H881V511H882V505H883V506H884V499H885V510H886V508H887V509H888V509H889V518H890V512H891V514H892V518H893V514H894V518H895V517H896V518H897V521H898V525H899V524H900V527H901V524H902V528H903V526H904V489H905V517H906V527H907V525H908V525H909V521H910V519H911V512H912V507H913V506H914V518H915V517H916V507H917V515H918V517H919V510H920V513H921V515H922V516H923V516H924V505H925V506H926V509H927V515H928V516H929V522H930V520H931V524H932V524H933V524H934V525H935V527H936V528H937V494H938V517H939V522H940V515H941V520H942V515H943V521H944V519H945V524H946V522H947V524H948V524H949V527H950V490H951V497H952V512H953V505H954V510H955V512H956V518H957V517H958V519H959V521H960V514H961V516H962V515H963V522H964V520H965V519H966V523H967V526H968V523H969V523H970V522H971V526H972V522H973V522H974V525H975V523H976V523H977V526H978V524H979V523H980V525H981V523H982V525H983V523H984V526H985V523H986V526H987V524H988V522H989V524H990V523H991V524H992V522H993V526H994V521H995V525H996V525H997V522H998V526H999V522H1000V526H1001V525H1002V525H1003V523H1004V525H1005V524H1006V525H1007V524H1008V521H1009V524H1010V524H1011V523H1012V523H1013V523H1014V523H1015V521H1016V520H1017V521H1018V525H1019V521H1020V520H1021V525H1022V521H1023V523H1024V523H1025V523H1026V522H1027V521H1028V519H1029V522H1030V521H1031V524H1032V520H1033V522H1034V524H1035V525H1036V525H1037V525H1038V523H1039V521H1040V524H1041V524H1042V519H1043V519H1044V519H1045V524H1046V525H1047V520H1048V524H1049V522H1050V523H1051V523H1052V519H1053V521H1054V519H1055V522H1056V525H1057V519H1058V524H1059V519H1060V520H1061V523H1062V520H1063V522H1064V523H1065V522H1066V525H1067V523H1068V521H1069V525H1070V523H1071V519H1072V525H1073V518H1074V523H1075V518H1076V522H1077V523H1078V519H1079V522H1080V522H1081V523H1082V517H1083V520H1084V524H1085V519H1086V524H1087V521H1088V524H1089V522H1090V524H1091V522H1092V519H1093V521H1094V519H1095V523H1096V518H1097V521H1098V519H1099V523H1100V522H1101V523H1102V524H1103V519H1104V516H1105V522H1106V520H1107V518H1108V519H1109V518H1110V518H1111V521H1112V520H1113V523H1114V519H1115V520H1116V520H1117V520H1118V519H1119V521H1120V520H1121V519H1122V521H1123V520H1124V518H1125V516H1126V520H1127V522H1128V517H1129V517H1130V519H1131V520H1132V521H1133V517H1134V521H1135V515H1136V523H1137V520H1138V515H1139V523H1140V519H1141V522H1142V517H1143V520H1144V517H1145V521H1146V515H1147V521H1148V521H1149V519H1150V522H1151V522H1152V522H1153V520H1154V521H1155V515H1156V517H1157V523H1158V516H1159V523H1160V517H1161V517H1162V523H1163V521H1164V521H1165V522H1166V518H1167V518H1168V521H1169V521H1170V516H1171V520H1172V521H1173V524H1174V524H1175V520H1176V518H1177V522H1178V520H1179V521H1180V522H1181V522H1182V517H1183V516H1184V521H1185V523H1186V521H1187V520H1188V518H1189V518H1190V518H1191V524H1192V519H1193V525H1194V524H1195V524H1196V524H1197V520H1198V524H1199V523H1200V525H1201V524H1202V521H1203V525H1204V522H1205V524H1206V523H1207V523H1208V522H1209V522H1210V523H1211V523H1212V525H1213V525H1214V525H1215V526H1216V525H1217V523H1218V527H1219V524H1220V525H1221V524H1222V524H1223V525H1224V526H1225V527H1226V526H1227V526H1228V527H1229V527H1230V527H1231V526H1232V528H1233V528H1234V527H1235V528H1236V529H1237V529H1238V528H1239V530H1240V529H1241V529H1242V530H1243V530H1244V530H1245V530H1246V531H1247V532H1246V532H1245V533H1244V533H1243V534H1242V534H1241V534H1240V534H1239V534H1238V535H1237V534H1236V535H1235V535H1234V536H1233V536H1232V536H1231V536H1230V536H1229V535H1228V538H1227V537H1226V538H1225V538H1224V537H1223V538H1222V538H1221V539H1220V537H1219V537H1218V536H1217V538H1216V541H1215V536H1214V541H1213V541H1212V541H1211V541H1210V538H1209V538H1208V538H1207V542H1206V538H1205V541H1204V543H1203V539H1202V538H1201V538H1200V543H1199V542H1198V539H1197V542H1196V545H1195V541H1194V539H1193V540H1192V539H1191V540H1190V543H1189V544H1188V545H1187V545H1186V546H1185V540H1184V540H1183V544H1182V541H1181V541H1180V547H1179V540H1178V545H1177V539H1176V547H1175V542H1174V542H1173V547H1172V547H1171V540H1170V540H1169V544H1168V540H1167V542H1166V539H1165V545H1164V543H1163V541H1162V548H1161V543H1160V544H1159V542H1158V548H1157V540H1156V543H1155V549H1154V542H1153V546H1152V541H1151V543H1150V547H1149V547H1148V541H1147V541H1146V542H1145V544H1144V542H1143V544H1142V546H1141V546H1140V548H1139V540H1138V546H1137V547H1136V545H1135V540H1134V547H1133V540H1132V544H1131V545H1130V541H1129V545H1128V546H1127V545H1126V544H1125V546H1124V539H1123V546H1122V544H1121V543H1120V547H1119V541H1118V539H1117V540H1116V539H1115V545H1114V544H1113V544H1112V541H1111V547H1110V545H1109V542H1108V542H1107V540H1106V541H1105V544H1104V546H1103V544H1102V544H1101V546H1100V540H1099V539H1098V546H1097V544H1096V540H1095V545H1094V546H1093V540H1092V544H1091V540H1090V541H1089V545H1088V539H1087V545H1086V545H1085V546H1084V544H1083V543H1082V546H1081V541H1080V540H1079V541H1078V542H1077V539H1076V544H1075V544H1074V539H1073V541H1072V541H1071V545H1070V544H1069V544H1068V543H1067V543H1066V541H1065V543H1064V540H1063V542H1062V541H1061V540H1060V539H1059V541H1058V544H1057V541H1056V538H1055V544H1054V544H1053V538H1052V539H1051V542H1050V538H1049V539H1048V543H1047V541H1046V538H1045V544H1044V541H1043V539H1042V544H1041V541H1040V541H1039V542H1038V543H1037V542H1036V543H1035V542H1034V539H1033V542H1032V542H1031V542H1030V541H1029V541H1028V542H1027V543H1026V541H1025V543H1024V540H1023V542H1022V540H1021V540H1020V542H1019V540H1018V537H1017V540H1016V540H1015V539H1014V538H1013V538H1012V543H1011V543H1010V538H1009V539H1008V539H1007V542H1006V540H1005V537H1004V542H1003V539H1002V537H1001V542H1000V538H999V537H998V539H997V538H996V538H995V541H994V542H993V539H992V541H991V541H990V540H989V541H988V540H987V538H986V538H985V540H984V538H983V537H982V538H981V539H980V539H979V538H978V538H977V536H976V539H975V538H974V539H973V540H972V540H971V540H970V539H969V539H968V541H967V539H966V540H965V537H964V540H963V546H962V553H961V552H960V543H959V547H958V547H957V549H956V546H955V549H954V549H953V550H952V558H951V566H950V535H949V538H948V537H947V539H946V542H945V546H944V549H943V550H942V546H941V548H940V553H939V550H938V563H937V536H936V536H935V539H934V537H933V537H932V539H931V544H930V543H929V548H928V552H927V550H926V550H925V552H924V544H923V551H922V551H921V543H920V551H919V551H918V548H917V555H916V551H915V545H914V553H913V550H912V552H911V552H910V540H909V536H908V537H907V538H906V551H905V566H904V536H903V537H902V536H901V535H900V538H899V536H898V539H897V540H896V544H895V549H894V544H893V548H892V544H891V550H890V556H889V554H888V548H887V548H886V550H885V556H884V555H883V552H882V551H881V559H880V557H879V549H878V551H877V555H876V560H875V559H874V553H873V553H872V553H871V550H870V557H869V553H868V555H867V553H866V545H865V542H864V551H863V557H862V552H861V551H860V538H859V539H858V537H857V537H856V562H855V564H854V561H853V536H852V534H851V535H850V535H849V535H848V535H847V535H846V534H845V535H844V538H843V542H842V546H841V549H840V543H839V543H838V548H837V547H836V554H835V553H834V551H833V544H832V557H831V558H830V559H829V560H828V552H827V550H826V542H825V547H824V556H823V555H822V560H821V558H820V571H819V536H818V536H817V536H816V537H815V536H814V537H813V541H812V544H811V544H810V547H809V544H808V546H807V547H806V549H805V549H804V542H803V543H802V548H801V548H800V554H799V545H798V535H797V538H796V541H795V544H794V542H793V542H792V547H791V545H790V553H789V549H788V547H787V553H786V556H785V549H784V542H783V543H782V559H781V560H780V554H779V558H778V553H777V549H776V548H775V549H774V541H773V547H772V558H771V561H770V543H769V554H768V558H767V557H766V550H765V554H764V553H763V554H762V551H761V545H760V560H759V570H758V564H757V562H756V562H755V556H754V549H753V547H752V548H751V558H750V555H749V552H748V547H747V547H746V563H745V560H744V563H743V560H742V559H741V558H740V555H739V549H738V555H737V557H736V551H735V565H734V547H733V549H732V542H731V548H730V555H729V556H728V550H727V551H726V550H725V544H724V553H723V554H722V549H721V546H720V550H719V554H718V546H717V549H716V552H715V553H714V546H713V543H712V548H711V547H710V545H709V552H708V545H707V550H706V544H705V544H704V552H703V551H702V552H701V552H700V552H699V547H698V545H697V549H696V546H695V547H694V552H693V555H692V544H691V544H690V540H689V540H688V550H687V550H686V540H685V542H684V549H683V551H682V547H681V541H680V541H679V544H678V547H677V549H676V546H675V541H674V555H673V553H672V567H671V560H670V562H669V564H668V537H667V538H666V537H665V540H664V545H663V545H662V545H661V544H660V547H659V544H658V544H657V542H656V537H655V538H654V539H653V544H652V552H651V559H650V552H649V553H648V543H647V543H646V551H645V546H644V548H643V552H642V548H641V551H640V551H639V553H638V546H637V545H636V537H635V539H634V538H633V540H632V544H631V546H630V544H629V540H628V552H627V550H626V549H625V553H624V553H623V553H622V552H621V553H620V544H619V549H618V552H617V556H616V544H615V549H614V553H613V562H612V561H611V566H610V562H609V558H608V534H607V534H606V535H605V535H604V534H603V534H602V536H601V536H600V535H599V540H598V545H597V543H596V545H595V547H594V544H593V545H592V547H591V543H590V540H589V545H588V543H587V545H586V548H585V549H584V549H583V550H582V540H581V545H580V540H579V560H578V534H577V533H576V535H575V535H574V534H573V535H572V534H571V535H570V551H569V551H568V547H567V544H566V543H565V547H564V541H563V543H562V540H561V545H560V547H559V559H558V562H557V554H556V563H555V560H554V551H553V551H552V546H551V535H550V535H549V535H548V536H547V535H546V536H545V548H544V555H543V551H542V552H541V551H540V546H539V550H538V551H537V555H536V552H535V559H534V553H533V555H532V555H531V556H530V534H529V536H528V534H527V534H526V534H525V535H524V546H523V557H522V534H521V535H520V536H519V536H518V536H517V538H516V537H515V540H514V544H513V543H512V545H511V548H510V545H509V544H508V543H507V539H506V539H505V544H504V559H503V556H502V548H501V539H500V540H499V541H498V542H497V542H496V548H495V555H494V541H493V534H492V536H491V536H490V535H489V537H488V537H487V537H486V535H485V548H484V558H483V546H482V550H481V549H480V550H479V551H478V543H477V539H476V543H475V544H474V549H473V551H472V548H471V546H470V546H469V546H468V549H467V545H466V550H465V553H464V557H463V535H462V536H461V539H460V540H459V542H458V544H457V549H456V543H455V559H454V534H453V534H452V534H451V537H450V540H449V539H448V538H447V542H446V541H445V539H444V544H443V542H442V547H441V549H440V547H439V551H438V543H437V558H436V537H435V537H434V539H433V538H432V538H431V542H430V549H429V535H428V535H427V535H426V534H425V535H424V534H423V533H422V535H421V544H420V543H419V542H418V545H417V545H416V538H415V540H414V543H413V543H412V544H411V544H410V542H409V546H408V542H407V543H406V542H405V540H404V549H403V552H402V546H401V542H400V557H399V560H398V534H397V534H396V534H395V534H394V534H393V535H392V535H391V535H390V534H389V536H388V540H387V545H386V546H385V547H384V548H383V550H382V541H381V540H380V541H379V540H378V546H377V547H376V548H375V545H374V540H373V541H372V550H371V551H370V544H369V558H368V560H367V561H366V560H365V535H364V534H363V535H362V534H361V534H360V535H359V535H358V537H357V538H356V541H355V547H354V544H353V545H352V547H351V544H350V549H349V544H348V545H347V547H346V548H345V551H344V550H343V548H342V546H341V545H340V546H339V550H338V549H337V549H336V546H335V547H334V547H333V547H332V545H331V543H330V549H329V545H328V546H327V548H326V551H325V548H324V547H323V551H322V547H321V547H320V547H319V549H318V544H317V548H316V547H315V546H314V545H313V547H312V544H311V544H310V548H309V545H308V544H307V549H306V545H305V548H304V549H303V549H302V549H301V545H300V548H299V545H298V545H297V545H296V539H295V539H294V538H293V539H292V541H291V540H290V539H289V541H288V539H287V541H286V540H285V539H284V540H283V539H282V540H281V539H280V538H279V538H278V537H277V537H276V535H275V534H274V534H273V534H272V535H271V534H270V535H269V535H268V535H267V535H266V535H265V535H264V536H263V537H262V536H261V539H260V539H259V538H258V540H257V540H256V540H255V539H254V540H253V539H252V538H251V537H250V538H249V538H248V537H247V538H246V535H245V536H244V535H243V536H242V537H241V538H240V536H239V538H238V538H237V539H236V537H235V537H234V539H233V538H232V537H231V536H230V538H229V536H228V538H227V535H226V533H225V534H224V534H223V534H222V535H221V535H220V535H219V535H218V535H217V535H216V535H215V536H214V538H213V537H212V538H211V538H210V539H209V538H208V540H207V538H206V539H205V538H204V537H203V538H202V537H201V538H200V535H199V535H198V537H197V537H196V538H195V537H194V537H193V539H192V536H191V537H190V539H189V537H188V539H187V538H186V537H185V537H184V536H183V536H182V535H181V534H180V533H179V534H178V534H177V534H176V534H175V534H174V534H173V533H172V534H171V534H170V534H169V535H168V535H167V537H166V536H165V537H164V537H163V537H162V538H161V538H160V536H159V537H158V536H157V537H156V538H155V536H154V535H153V536H152V535H151V537H150V536H149V537H148V538H147V538H146V536H145V537H144V538H143V536H142V536H141V535H140V536H139V534H138V533H137V532H136V533H135V532H134V532H133Z" fill="#3232c8"/><path d="M133 531V531H134V531H135V531H136V531H137V531H138V531H139V530H140V530H141V529H142V529H143V529H144V529H145V529H146V529H147V529H148V529H149V529H150V529H151V530H152V530H153V530H154V530H155V529H156V529H157V529H158V529H159V529H160V529H161V529H162V529H163V529H164V529H165V529H166V529H167V530H168V530H169V530H170V530H171V530H172V531H173V531H174V531H175V531H176V531H177V531H178V531H179V531H180V531H181V531H182V530H183V529H184V529H185V529H186V529H187V529H188V529H189V529H190V529H191V529H192V529H193V529H194V529H195V529H196V529H197V529H198V529H199V530H200V529H201V529H202V529H203V529H204V529H205V529H206V529H207V529H208V529H209V529H210V529H211V529H212V529H213V529H214V529H215V530H216V530H217V530H218V530H219V530H220V530H221V530H222V531H223V531H224V531H225V531H226V530H227V530H228V529H229V529H230V529H231V529H232V529H233V529H234V529H235V529H236V529H237V529H238V529H239V529H240V529H241V529H242V529H243V530H244V530H245V530H246V529H247V529H248V529H249V529H250V529H251V529H252V529H253V529H254V529H255V529H256V529H257V529H258V529H259V529H260V529H261V529H262V529H263V529H264V530H265V530H266V530H267V530H268V530H269V530H270V530H271V530H272V530H273V530H274V530H275V530H276V530H277V529H278V529H279V529H280V529H281V529H282V529H283V528H284V529H285V528H286V528H287V528H288V528H289V528H290V528H291V528H292V528H293V528H294V528H295V528H296V527H297V527H298V526H299V526H300V526H301V526H302V525H303V526H304V525H305V526H306V525H307V525H308V526H309V526H310V526H311V526H312V526H313V526H314V526H315V525H316V526H317V525H318V525H319V525H320V525H321V525H322V525H323V526H324V526H325V526H326V526H327V526H328V526H329V526H330V526H331V526H332V526H333V526H334V526H335V526H336V526H337V526H338V526H339V526H340V526H341V526H342V526H343V525H344V525H345V525H346V525H347V525H348V526H349V526H350V526H351V526H352V526H353V526H354V526H355V527H356V528H357V528H358V529H359V530H360V530H361V530H362V530H363V530H364V531H365V527H366V526H367V526H368V526H369V527H370V527H371V527H372V527H373V527H374V527H375V527H376V527H377V527H378V527H379V528H380V528H381V528H382V528H383V528H384V528H385V528H386V528H387V529H388V529H389V530H390V530H391V530H392V531H393V531H394V531H395V531H396V531H397V531H398V527H399V526H400V527H401V527H402V527H403V527H404V527H405V527H406V527H407V528H408V527H409V527H410V528H411V528H412V528H413V529H414V529H415V529H416V529H417V529H418V529H419V529H420V529H421V530H422V530H423V531H424V531H425V531H426V531H427V531H428V531H429V529H430V528H431V528H432V529H433V529H434V529H435V530H436V528H437V527H438V527H439V527H440V528H441V528H442V528H443V528H444V529H445V529H446V529H447V529H448V529H449V529H450V529H451V530H452V530H453V530H454V528H455V528H456V528H457V528H458V529H459V529H460V529H461V530H462V530H463V528H464V527H465V527H466V528H467V527H468V527H469V528H470V528H471V528H472V527H473V528H474V527H475V528H476V528H477V528H478V528H479V528H480V528H481V528H482V528H483V527H484V526H485V528H486V529H487V530H488V530H489V530H490V530H491V531H492V530H493V529H494V528H495V528H496V528H497V529H498V529H499V529H500V529H501V528H502V527H503V527H504V527H505V527H506V527H507V527H508V528H509V527H510V528H511V528H512V528H513V529H514V529H515V529H516V529H517V530H518V530H519V530H520V530H521V530H522V528H523V527H524V528H525V529H526V530H527V530H528V530H529V530H530V528H531V527H532V527H533V527H534V526H535V526H536V527H537V527H538V527H539V526H540V526H541V526H542V526H543V527H544V527H545V528H546V529H547V530H548V530H549V531H550V531H551V529H552V528H553V526H554V526H555V525H556V525H557V525H558V525H559V526H560V526H561V526H562V527H563V527H564V528H565V527H566V528H567V528H568V528H569V528H570V529H571V530H572V530H573V530H574V531H575V531H576V531H577V531H578V528H579V527H580V528H581V528H582V528H583V528H584V528H585V528H586V528H587V528H588V528H589V528H590V528H591V528H592V528H593V528H594V528H595V528H596V528H597V528H598V528H599V529H600V530H601V530H602V530H603V531H604V531H605V531H606V531H607V531H608V529H609V527H610V526H611V526H612V526H613V526H614V526H615V526H616V526H617V526H618V526H619V527H620V527H621V527H622V527H623V527H624V527H625V527H626V527H627V527H628V528H629V528H630V528H631V528H632V529H633V529H634V529H635V530H636V529H637V528H638V528H639V528H640V527H641V527H642V527H643V527H644V527H645V527H646V527H647V527H648V527H649V526H650V526H651V527H652V527H653V528H654V529H655V529H656V529H657V529H658V529H659V529H660V528H661V528H662V528H663V528H664V528H665V529H666V529H667V530H668V527H669V526H670V525H671V525H672V525H673V526H674V526H675V527H676V527H677V527H678V527H679V527H680V527H681V527H682V527H683V527H684V527H685V527H686V528H687V528H688V528H689V528H690V528H691V527H692V527H693V527H694V527H695V527H696V527H697V527H698V527H699V527H700V528H701V527H702V527H703V527H704V527H705V527H706V527H707V527H708V527H709V527H710V528H711V528H712V527H713V527H714V527H715V527H716V527H717V527H718V527H719V527H720V527H721V527H722V527H723V527H724V527H725V527H726V527H727V527H728V527H729V527H730V527H731V527H732V527H733V527H734V525H735V526H736V526H737V526H738V526H739V527H740V526H741V526H742V526H743V526H744V526H745V526H746V526H747V526H748V525H749V526H750V526H751V526H752V526H753V527H754V527H755V527H756V525H757V525H758V524H759V525H760V525H761V525H762V525H763V526H764V526H765V525H766V525H767V526H768V525H769V525H770V526H771V526H772V526H773V526H774V526H775V526H776V526H777V526H778V526H779V526H780V526H781V526H782V526H783V526H784V526H785V527H786V527H787V527H788V527H789V527H790V527H791V528H792V528H793V528H794V528H795V528H796V529H797V529H798V529H799V528H800V528H801V527H802V528H803V528H804V528H805V528H806V528H807V528H808V528H809V528H810V529H811V529H812V529H813V529H814V530H815V530H816V530H817V530H818V530H819V527H820V527H821V527H822V527H823V527H824V527H825V527H826V526H827V526H828V526H829V526H830V526H831V527H832V527H833V527H834V527H835V527H836V526H837V527H838V527H839V527H840V528H841V528H842V528H843V529H844V530H845V530H846V530H847V530H848V530H849V530H850V530H851V531H852V531H853V527H854V526H855V525H856V527H857V528H858V529H859V529H860V528H861V527H862V527H863V527H864V527H865V527H866V526H867V526H868V527H869V527H870V527H871V527H872V527H873V527H874V526H875V527H876V526H877V526H878V526H879V525H880V525H881V525H882V525H883V525H884V525H885V525H886V526H887V525H888V526H889V526H890V526H891V527H892V527H893V528H894V528H895V528H896V528H897V529H898V529H899V529H900V529H901V529H902V529H903V529H904V527H905V526H906V528H907V529H908V529H909V529H910V528H911V527H912V527H913V527H914V527H915V527H916V527H917V527H918V526H919V527H920V526H921V526H922V527H923V527H924V527H925V527H926V527H927V526H928V527H929V527H930V528H931V529H932V529H933V530H934V530H935V530H936V530H937V527H938V526H939V527H940V527H941V527H942V528H943V528H944V528H945V529H946V529H947V529H948V529H949V530H950V526H951V526H952V526H953V526H954V526H955V527H956V528H957V528H958V528H959V528H960V528H961V527H962V527H963V528H964V528H965V528H966V529H967V529H968V529H969V529H970V529H971V529H972V529H973V529H974V529H975V529H976V529H977V529H978V529H979V529H980V529H981V529H982V529H983V529H984V529H985V529H986V529H987V529H988V528H989V528H990V528H991V528H992V528H993V529H994V529H995V529H996V528H997V529H998V528H999V528H1000V528H1001V528H1002V528H1003V528H1004V528H1005V528H1006V528H1007V528H1008V528H1009V528H1010V528H1011V528H1012V528H1013V528H1014V528H1015V528H1016V528H1017V528H1018V528H1019V528H1020V528H1021V528H1022V528H1023V528H1024V528H1025V528H1026V528H1027V528H1028V528H1029V528H1030V528H1031V528H1032V528H1033V528H1034V528H1035V528H1036V528H1037V528H1038V528H1039V528H1040V528H1041V528H1042V528H1043V528H1044V528H1045V528H1046V528H1047V528H1048V528H1049V528H1050V528H1051V528H1052V528H1053V528H1054V528H1055V528H1056V528H1057V528H1058V528H1059V528H1060V528H1061V528H1062V528H1063V528H1064V528H1065V528H1066V528H1067V528H1068V528H1069V528H1070V528H1071V528H1072V527H1073V528H1074V528H1075V528H1076V528H1077V528H1078V528H1079V528H1080V528H1081V528H1082V528H1083V528H1084V528H1085V528H1086V527H1087V527H1088V527H1089V527H1090V527H1091V527H1092V527H1093V528H1094V527H1095V527H1096V527H1097V527H1098V527H1099V527H1100V527H1101V527H1102V528H1103V528H1104V528H1105V528H1106V527H1107V527H1108V527H1109V528H1110V527H1111V527H1112V527H1113V527H1114V527H1115V527H1116V527H1117V527H1118V527H1119V527H1120V527H1121V527H1122V527H1123V527H1124V527H1125V527H1126V527H1127V527H1128V527H1129V527H1130V527H1131V527H1132V527H1133V527H1134V527H1135V527H1136V527H1137V527H1138V527H1139V527H1140V527H1141V527H1142V527H1143V527H1144V527H1145V527H1146V527H1147V527H1148V527H1149V527H1150V527H1151V527H1152V527H1153V527H1154V527H1155V527H1156V527H1157V527H1158V527H1159V527H1160V527H1161V527H1162V527H1163V527H1164V527H1165V527H1166V527H1167V527H1168V527H1169V527H1170V527H1171V527H1172V527H1173V527H1174V527H1175V527H1176V527H1177V527H1178V527H1179V527H1180V527H1181V527H1182V527H1183V528H1184V528H1185V528H1186V528H1187V528H1188V528H1189V527H1190V528H1191V528H1192V528H1193V528H1194V528H1195V528H1196V528H1197V528H1198V528H1199V528H1200V528H1201V528H1202V528H1203V528H1204V528H1205V528H1206V528H1207V528H1208V528H1209V529H1210V528H1211V529H1212V529H1213V529H1214V529H1215V529H1216V529H1217V529H1218V529H1219V529H1220V529H1221V529H1222V529H1223V529H1224V529H1225V529H1226V529H1227V529H1228V529H1229V530H1230V530H1231V530H1232V530H1233V530H1234V530H1235V530H1236V530H1237V530H1238V530H1239V530H1240V531H1241V531H1242V531H1243V531H1244V531H1245V531H1246V531H1247V532H1246V532H1245V532H1244V532H1243V532H1242V532H1241V532H1240V533H1239V533H1238V533H1237V533H1236V533H1235V533H1234V533H1233V533H1232V533H1231V533H1230V533H1229V534H1228V534H1227V534H1226V534H1225V534H1224V534H1223V534H1222V534H1221V534H1220V534H1219V534H1218V534H1217V534H1216V534H1215V534H1214V534H1213V534H1212V534H1211V535H1210V534H1209V535H1208V535H1207V535H1206V535H1205V535H1204V535H1203V535H1202V535H1201V535H1200V535H1199V535H1198V535H1197V535H1196V535H1195V535H1194V535H1193V535H1192V535H1191V535H1190V536H1189V535H1188V535H1187V535H1186V535H1185V535H1184V535H1183V536H1182V536H1181V536H1180V536H1179V536H1178V536H1177V536H1176V536H1175V536H1174V536H1173V536H1172V536H1171V536H1170V536H1169V536H1168V536H1167V536H1166V536H1165V536H1164V536H1163V536H1162V536H1161V536H1160V536H1159V536H1158V536H1157V536H1156V536H1155V536H1154V536H1153V536H1152V536H1151V536H1150V536H1149V536H1148V536H1147V536H1146V536H1145V536H1144V536H1143V536H1142V536H1141V536H1140V536H1139V536H1138V536H1137V536H1136V536H1135V536H1134V536H1133V536H1132V536H1131V536H1130V536H1129V536H1128V536H1127V536H1126V536H1125V536H1124V536H1123V536H1122V536H1121V536H1120V536H1119V536H1118V536H1117V536H1116V536H1115V536H1114V536H1113V536H1112V536H1111V536H1110V535H1109V536H1108V536H1107V536H1106V535H1105V535H1104V535H1103V535H1102V536H1101V536H1100V536H1099V536H1098V536H1097V536H1096V536H1095V536H1094V535H1093V536H1092V536H1091V536H1090V536H1089V536H1088V536H1087V536H1086V535H1085V535H1084V535H1083V535H1082V535H1081V535H1080V535H1079V535H1078V535H1077V535H1076V535H1075V535H1074V535H1073V536H1072V535H1071V535H1070V535H1069V535H1068V535H1067V535H1066V535H1065V535H1064V535H1063V535H1062V535H1061V535H1060V535H1059V535H1058V535H1057V535H1056V535H1055V535H1054V535H1053V535H1052V535H1051V535H1050V535H1049V535H1048V535H1047V535H1046V535H1045V535H1044V535H1043V535H1042V535H1041V535H1040V535H1039V535H1038V535H1037V535H1036V535H1035V535H1034V535H1033V535H1032V535H1031V535H1030V535H1029V535H1028V535H1027V535H1026V535H1025V535H1024V535H1023V535H1022V535H1021V535H1020V535H1019V535H1018V535H1017V535H1016V535H1015V535H1014V535H1013V535H1012V535H1011V535H1010V535H1009V535H1008V535H1007V535H1006V535H1005V535H1004V535H1003V535H1002V535H1001V535H1000V535H999V535H998V534H997V535H996V534H995V534H994V534H993V535H992V535H991V535H990V535H989V535H988V534H987V534H986V534H985V534H984V534H983V534H982V534H981V534H980V534H979V534H978V534H977V534H976V534H975V534H974V534H973V534H972V534H971V534H970V534H969V534H968V534H967V534H966V535H965V535H964V535H963V536H962V536H961V535H960V535H959V535H958V535H957V535H956V536H955V537H954V537H953V537H952V537H951V537H950V533H949V534H948V534H947V534H946V534H945V535H944V535H943V535H942V536H941V536H940V536H939V537H938V536H937V533H936V533H935V533H934V533H933V534H932V534H931V535H930V536H929V536H928V537H927V536H926V536H925V536H924V536H923V536H922V537H921V537H920V536H919V537H918V536H917V536H916V536H915V536H914V536H913V536H912V536H911V535H910V534H909V534H908V534H907V535H906V537H905V536H904V534H903V534H902V534H901V534H900V534H899V534H898V534H897V535H896V535H895V535H894V535H893V536H892V536H891V537H890V537H889V537H888V538H887V537H886V538H885V538H884V538H883V538H882V538H881V538H880V538H879V537H878V537H877V537H876V536H875V537H874V536H873V536H872V536H871V536H870V536H869V536H868V537H867V537H866V536H865V536H864V536H863V536H862V536H861V535H860V534H859V534H858V535H857V536H856V538H855V537H854V536H853V532H852V532H851V533H850V533H849V533H848V533H847V533H846V533H845V533H844V534H843V535H842V535H841V535H840V536H839V536H838V536H837V537H836V536H835V536H834V536H833V536H832V536H831V537H830V537H829V537H828V537H827V537H826V536H825V536H824V536H823V536H822V536H821V536H820V536H819V533H818V533H817V533H816V533H815V533H814V534H813V534H812V534H811V534H810V535H809V535H808V535H807V535H806V535H805V535H804V535H803V535H802V536H801V535H800V535H799V534H798V534H797V534H796V535H795V535H794V535H793V535H792V535H791V536H790V536H789V536H788V536H787V536H786V536H785V537H784V537H783V537H782V537H781V537H780V537H779V537H778V537H777V537H776V537H775V537H774V537H773V537H772V537H771V537H770V538H769V538H768V537H767V538H766V538H765V537H764V537H763V538H762V538H761V538H760V538H759V539H758V538H757V538H756V536H755V536H754V536H753V537H752V537H751V537H750V537H749V538H748V537H747V537H746V537H745V537H744V537H743V537H742V537H741V537H740V536H739V537H738V537H737V537H736V537H735V538H734V536H733V536H732V536H731V536H730V536H729V536H728V536H727V536H726V536H725V536H724V536H723V536H722V536H721V536H720V536H719V536H718V536H717V536H716V536H715V536H714V536H713V536H712V535H711V535H710V536H709V536H708V536H707V536H706V536H705V536H704V536H703V536H702V536H701V535H700V536H699V536H698V536H697V536H696V536H695V536H694V536H693V536H692V536H691V535H690V535H689V535H688V535H687V535H686V536H685V536H684V536H683V536H682V536H681V536H680V536H679V536H678V536H677V536H676V536H675V537H674V537H673V538H672V538H671V538H670V537H669V536H668V533H667V534H666V534H665V535H664V535H663V535H662V535H661V535H660V534H659V534H658V534H657V534H656V534H655V534H654V535H653V536H652V536H651V537H650V537H649V536H648V536H647V536H646V536H645V536H644V536H643V536H642V536H641V536H640V535H639V535H638V535H637V534H636V533H635V534H634V534H633V534H632V535H631V535H630V535H629V535H628V536H627V536H626V536H625V536H624V536H623V536H622V536H621V536H620V536H619V537H618V537H617V537H616V537H615V537H614V537H613V537H612V537H611V537H610V536H609V534H608V532H607V532H606V532H605V532H604V532H603V533H602V533H601V533H600V534H599V535H598V535H597V535H596V535H595V535H594V535H593V535H592V535H591V535H590V535H589V535H588V535H587V535H586V535H585V535H584V535H583V535H582V535H581V535H580V536H579V535H578V532H577V532H576V532H575V532H574V533H573V533H572V533H571V534H570V535H569V535H568V535H567V535H566V536H565V535H564V536H563V536H562V537H561V537H560V537H559V538H558V538H557V538H556V538H555V537H554V537H553V535H552V534H551V532H550V532H549V533H548V533H547V534H546V535H545V536H544V536H543V537H542V537H541V537H540V537H539V536H538V536H537V536H536V537H535V537H534V536H533V536H532V536H531V535H530V533H529V533H528V533H527V533H526V534H525V535H524V536H523V535H522V533H521V533H520V533H519V533H518V533H517V534H516V534H515V534H514V534H513V535H512V535H511V535H510V536H509V535H508V536H507V536H506V536H505V536H504V536H503V536H502V535H501V534H500V534H499V534H498V534H497V535H496V535H495V535H494V534H493V533H492V532H491V533H490V533H489V533H488V533H487V534H486V535H485V537H484V536H483V535H482V535H481V535H480V535H479V535H478V535H477V535H476V535H475V536H474V535H473V536H472V535H471V535H470V535H469V536H468V536H467V535H466V536H465V536H464V535H463V533H462V533H461V534H460V534H459V534H458V535H457V535H456V535H455V535H454V533H453V533H452V533H451V534H450V534H449V534H448V534H447V534H446V534H445V534H444V535H443V535H442V535H441V535H440V536H439V536H438V536H437V535H436V533H435V534H434V534H433V534H432V535H431V535H430V534H429V532H428V532H427V532H426V532H425V532H424V532H423V533H422V533H421V534H420V534H419V534H418V534H417V534H416V534H415V534H414V534H413V535H412V535H411V535H410V536H409V536H408V535H407V536H406V536H405V536H404V536H403V536H402V536H401V536H400V537H399V536H398V532H397V532H396V532H395V532H394V532H393V532H392V533H391V533H390V533H389V534H388V534H387V535H386V535H385V535H384V535H383V535H382V535H381V535H380V535H379V536H378V536H377V536H376V536H375V536H374V536H373V536H372V536H371V536H370V536H369V537H368V537H367V537H366V536H365V532H364V533H363V533H362V533H361V533H360V533H359V534H358V535H357V535H356V536H355V537H354V537H353V537H352V537H351V537H350V537H349V537H348V538H347V538H346V538H345V538H344V538H343V537H342V537H341V537H340V537H339V537H338V537H337V537H336V537H335V537H334V537H333V537H332V537H331V537H330V537H329V537H328V537H327V537H326V537H325V537H324V537H323V538H322V538H321V538H320V538H319V538H318V538H317V537H316V538H315V537H314V537H313V537H312V537H311V537H310V537H309V537H308V538H307V538H306V537H305V538H304V537H303V538H302V537H301V537H300V537H299V537H298V536H297V536H296V535H295V535H294V535H293V535H292V535H291V535H290V535H289V535H288V535H287V535H286V535H285V534H284V535H283V534H282V534H281V534H280V534H279V534H278V534H277V533H276V533H275V533H274V533H273V533H272V533H271V533H270V533H269V533H268V533H267V533H266V533H265V533H264V534H263V534H262V534H261V534H260V534H259V534H258V534H257V534H256V534H255V534H254V534H253V534H252V534H251V534H250V534H249V534H248V534H247V534H246V533H245V533H244V533H243V534H242V534H241V534H240V534H239V534H238V534H237V534H236V534H235V534H234V534H233V534H232V534H231V534H230V534H229V534H228V533H227V533H226V532H225V532H224V532H223V532H222V533H221V533H220V533H219V533H218V533H217V533H216V533H215V534H214V534H213V534H212V534H211V534H210V534H209V534H208V534H207V534H206V534H205V534H204V534H203V534H202V534H201V534H200V533H199V534H198V534H197V534H196V534H195V534H194V534H193V534H192V534H191V534H190V534H189V534H188V534H187V534H186V534H185V534H184V534H183V533H182V532H181V532H180V532H179V532H178V532H177V532H176V532H175V532H174V532H173V532H172V533H171V533H170V533H169V533H168V533H167V534H166V534H165V534H164V534H163V534H162V534H161V534H160V534H159V534H158V534H157V534H156V534H155V533H154V533H153V533H152V533H151V534H150V534H149V534H148V534H147V534H146V534H145V534H144V534H143V534H142V534H141V533H140V533H139V532H138V532H137V532H136V532H135V532H134V532H133Z" fill="#6464dc"/>
<path d="M133 681V681H134V680H135V680H136V680H137V680H138V678H139V676H140V677H141V675H142V676H143V676H144V675H145V677H146V677H147V677H148V676H149V676H150V677H151V677H152V678H153V678H154V676H155V676H156V677H157V676H158V677H159V675H160V677H161V675H162V676H163V675H164V676H165V676H166V676H167V677H168V677H169V679H170V679H171V679H172V679H173V679H174V679H175V679H176V679H177V679H178V680H179V679H180V679H181V678H182V677H183V675H184V676H185V676H186V677H187V676H188V675H189V675H190V676H191V675H192V676H193V675H194V677H195V676H196V675H197V676H198V677H199V676H200V677H201V675H202V675H203V675H204V674H205V674H206V675H207V675H208V676H209V676H210V676H211V676H212V676H213V676H214V678H215V678H216V679H217V678H218V678H219V679H220V678H221V679H222V679H223V679H224V679H225V679H226V678H227V676H228V677H229V675H230V674H231V675H232V675H233V675H234V674H235V675H236V677H237V675H238V675H239V676H240V677H241V677H242V677H243V677H244V677H245V677H246V677H247V676H248V674H249V674H250V674H251V675H252V674H253V673H254V674H255V673H256V675H257V674H258V675H259V676H260V675H261V676H262V677H263V676H264V677H265V678H266V678H267V678H268V678H269V678H270V679H271V679H272V679H273V679H274V679H275V678H276V676H277V676H278V674H279V675H280V675H281V675H282V672H283V676H284V675H285V676H286V673H287V674H288V674H289V675H290V674H291V674H292V672H293V673H294V671H295V672H296V670H297V668H298V670H299V664H300V668H301V667H302V667H303V660H304V661H305V664H306V667H307V667H308V667H309V668H310V665H311V666H312V663H313V667H314V667H315V663H316V667H317V664H318V669H319V666H320V665H321V667H322V668H323V663H324V665H325V668H326V663H327V667H328V664H329V669H330V665H331V668H332V665H333V669H334V668H335V668H336V665H337V669H338V664H339V666H340V666H341V666H342V665H343V668H344V667H345V661H346V666H347V667H348V665H349V669H350V666H351V667H352V665H353V667H354V666H355V671H356V675H357V676H358V678H359V678H360V678H361V678H362V679H363V678H364V680H365V649H366V646H367V663H368V659H369V669H370V663H371V664H372V667H373V665H374V664H375V667H376V665H377V662H378V665H379V660H380V667H381V665H382V671H383V667H384V668H385V668H386V672H387V675H388V675H389V677H390V678H391V678H392V678H393V678H394V678H395V678H396V679H397V679H398V647H399V648H400V664H401V670H402V670H403V673H404V662H405V661H406V664H407V668H408V661H409V666H410V674H411V670H412V671H413V673H414V671H415V671H416V669H417V669H418V669H419V672H420V673H421V679H422V679H423V679H424V679H425V679H426V678H427V678H428V679H429V671H430V667H431V673H432V675H433V673H434V673H435V676H436V648H437V656H438V672H439V668H440V663H441V668H442V666H443V667H444V672H445V671H446V673H447V671H448V676H449V673H450V673H451V678H452V679H453V679H454V647H455V670H456V667H457V672H458V672H459V675H460V675H461V677H462V677H463V649H464V671H465V673H466V661H467V662H468V663H469V666H470V670H471V666H472V655H473V666H474V671H475V669H476V670H477V668H478V665H479V664H480V669H481V674H482V667H483V648H484V657H485V678H486V678H487V678H488V678H489V678H490V679H491V679H492V678H493V672H494V658H495V658H496V671H497V671H498V673H499V673H500V673H501V667H502V657H503V654H504V670H505V671H506V668H507V668H508V666H509V669H510V661H511V668H512V673H513V676H514V675H515V676H516V676H517V677H518V676H519V677H520V676H521V677H522V648H523V652H524V676H525V676H526V676H527V677H528V678H529V677H530V659H531V662H532V659H533V653H534V669H535V664H536V666H537V665H538V656H539V655H540V663H541V665H542V663H543V670H544V668H545V678H546V678H547V678H548V679H549V679H550V680H551V668H552V654H553V656H554V650H555V653H556V647H557V646H558V648H559V652H560V666H561V673H562V667H563V661H564V661H565V661H566V661H567V663H568V666H569V667H570V678H571V679H572V679H573V678H574V678H575V679H576V680H577V680H578V649H579V672H580V665H581V666H582V669H583V668H584V670H585V673H586V665H587V663H588V662H589V662H590V675H591V674H592V671H593V670H594V669H595V667H596V663H597V664H598V670H599V678H600V679H601V680H602V678H603V679H604V678H605V678H606V679H607V679H608V659H609V656H610V656H611V643H612V652H613V650H614V659H615V658H616V657H617V662H618V662H619V670H620V658H621V664H622V664H623V671H624V662H625V663H626V670H627V666H628V672H629V669H630V666H631V665H632V676H633V677H634V674H635V675H636V663H637V663H638V661H639V657H640V668H641V662H642V658H643V664H644V664H645V667H646V661H647V657H648V659H649V663H650V650H651V668H652V671H653V674H654V674H655V673H656V670H657V671H658V670H659V668H660V666H661V669H662V672H663V670H664V674H665V675H666V675H667V676H668V642H669V647H670V656H671V639H672V652H673V659H674V669H675V669H676V660H677V664H678V668H679V665H680V665H681V669H682V665H683V666H684V667H685V672H686V667H687V667H688V673H689V670H690V659H691V659H692V669H693V669H694V664H695V659H696V659H697V661H698V665H699V666H700V666H701V661H702V660H703V660H704V664H705V665H706V671H707V668H708V673H709V667H710V669H711V667H712V671H713V663H714V659H715V660H716V665H717V664H718V672H719V667H720V659H721V663H722V668H723V667H724V660H725V662H726V663H727V664H728V672H729V668H730V667H731V663H732V658H733V662H734V642H735V656H736V656H737V654H738V665H739V662H740V653H741V656H742V668H743V663H744V660H745V657H746V653H747V662H748V655H749V652H750V656H751V662H752V667H753V666H754V667H755V653H756V645H757V641H758V636H759V659H760V654H761V653H762V658H763V664H764V658H765V655H766V655H767V648H768V660H769V652H770V656H771V663H772V661H773V657H774V658H775V657H776V663H777V662H778V659H779V660H780V654H781V655H782V668H783V663H784V661H785V664H786V663H787V660H788V666H789V666H790V665H791V661H792V662H793V665H794V672H795V673H796V672H797V676H798V667H799V663H800V669H801V667H802V661H803V666H804V671H805V666H806V672H807V673H808V665H809V667H810V670H811V672H812V671H813V676H814V675H815V677H816V676H817V677H818V678H819V634H820V660H821V660H822V663H823V657H824V663H825V659H826V668H827V667H828V659H829V661H830V667H831V673H832V660H833V661H834V666H835V663H836V656H837V667H838V672H839V670H840V669H841V671H842V671H843V674H844V677H845V678H846V677H847V678H848V677H849V677H850V678H851V677H852V679H853V643H854V641H855V644H856V674H857V676H858V673H859V676H860V660H861V656H862V663H863V664H864V660H865V670H866V654H867V655H868V658H869V663H870V663H871V664H872V657H873V658H874V661H875V653H876V666H877V664H878V649H879V657H880V647H881V653H882V647H883V656H884V648H885V650H886V658H887V659H888V659H889V655H890V663H891V660H892V662H893V666H894V667H895V668H896V673H897V676H898V675H899V674H900V672H901V672H902V675H903V676H904V640H905V661H906V673H907V675H908V675H909V670H910V668H911V662H912V667H913V664H914V656H915V654H916V655H917V657H918V663H919V667H920V665H921V662H922V656H923V655H924V667H925V663H926V672H927V664H928V665H929V672H930V672H931V673H932V674H933V675H934V675H935V676H936V678H937V645H938V653H939V662H940V661H941V663H942V666H943V671H944V667H945V671H946V672H947V672H948V672H949V676H950V639H951V648H952V662H953V657H954V661H955V662H956V670H957V668H958V668H959V669H960V661H961V658H962V657H963V665H964V667H965V672H966V672H967V673H968V676H969V677H970V675H971V675H972V677H973V672H974V672H975V672H976V674H977V674H978V676H979V673H980V673H981V672H982V677H983V673H984V675H985V674H986V674H987V671H988V674H989V674H990V674H991V676H992V672H993V673H994V675H995V676H996V672H997V676H998V674H999V671H1000V673H1001V674H1002V675H1003V671H1004V674H1005V671H1006V675H1007V676H1008V672H1009V671H1010V672H1011V673H1012V675H1013V671H1014V674H1015V674H1016V673H1017V674H1018V674H1019V673H1020V675H1021V671H1022V675H1023V674H1024V676H1025V671H1026V670H1027V673H1028V672H1029V674H1030V673H1031V669H1032V671H1033V675H1034V672H1035V675H1036V670H1037V675H1038V674H1039V672H1040V671H1041V671H1042V673H1043V675H1044V675H1045V672H1046V675H1047V669H1048V673H1049V673H1050V673H1051V670H1052V674H1053V674H1054V669H1055V670H1056V670H1057V670H1058V673H1059V670H1060V670H1061V672H1062V675H1063V675H1064V669H1065V672H1066V672H1067V669H1068V675H1069V670H1070V669H1071V668H1072V669H1073V672H1074V674H1075V670H1076V672H1077V673H1078V673H1079V671H1080V671H1081V668H1082V669H1083V673H1084V670H1085V673H1086V675H1087V667H1088V675H1089V672H1090V673H1091V668H1092V668H1093V668H1094V673H1095V670H1096V667H1097V674H1098V667H1099V673H1100V670H1101V668H1102V670H1103V666H1104V674H1105V672H1106V673H1107V670H1108V667H1109V669H1110V671H1111V672H1112V667H1113V666H1114V672H1115V668H1116V668H1117V669H1118V673H1119V667H1120V667H1121V670H1122V672H1123V673H1124V673H1125V671H1126V671H1127V666H1128V672H1129V668H1130V671H1131V672H1132V671H1133V667H1134V667H1135V666H1136V668H1137V666H1138V666H1139V672H1140V670H1141V671H1142V668H1143V668H1144V665H1145V671H1146V672H1147V666H1148V673H1149V673H1150V672H1151V666H1152V671H1153V667H1154V669H1155V668H1156V665H1157V667H1158V669H1159V667H1160V671H1161V669H1162V669H1163V665H1164V669H1165V669H1166V666H1167V672H1168V673H1169V673H1170V668H1171V672H1172V666H1173V670H1174V668H1175V666H1176V668H1177V673H1178V668H1179V671H1180V670H1181V668H1182V668H1183V672H1184V670H1185V671H1186V669H1187V670H1188V667H1189V669H1190V672H1191V670H1192V671H1193V675H1194V670H1195V673H1196V673H1197V674H1198V674H1199V670H1200V674H1201V675H1202V674H1203V673H1204V674H1205V672H1206V673H1207V673H1208V672H1209V676H1210V673H1211V675H1212V676H1213V673H1214V674H1215V675H1216V673H1217V673H1218V676H1219V674H1220V677H1221V673H1222V677H1223V678H1224V678H1225V677H1226V675H1227V675H1228V678H1229V678H1230V678H1231V676H1232V677H1233V677H1234V678H1235V677H1236V679H1237V678H1238V678H1239V680H1240V679H1241V680H1242V680H1243V680H1244V680H1245V680H1246V681H1247V682H1246V682H1245V683H1244V683H1243V684H1242V684H1241V684H1240V684H1239V684H1238V685H1237V684H1236V685H1235V684H1234V684H1233V687H1232V686H1231V686H1230V685H1229V686H1228V687H1227V687H1226V687H1225V688H1224V688H1223V688H1222V690H1221V687H1220V688H1219V687H1218V687H1217V690H1216V686H1215V688H1214V688H1213V690H1212V690H1211V692H1210V691H1209V692H1208V689H1207V689H1206V693H1205V689H1204V692H1203V689H1202V692H1201V689H1200V693H1199V689H1198V690H1197V688H1196V695H1195V693H1194V689H1193V691H1192V694H1191V690H1190V693H1189V696H1188V694H1187V692H1186V692H1185V689H1184V694H1183V693H1182V690H1181V695H1180V694H1179V696H1178V693H1177V691H1176V696H1175V693H1174V690H1173V693H1172V691H1171V691H1170V694H1169V691H1168V690H1167V698H1166V691H1165V694H1164V690H1163V697H1162V695H1161V696H1160V698H1159V694H1158V697H1157V690H1156V697H1155V696H1154V690H1153V690H1152V697H1151V694H1150V693H1149V691H1148V697H1147V694H1146V696H1145V696H1144V693H1143V695H1142V696H1141V694H1140V698H1139V693H1138V696H1137V691H1136V697H1135V690H1134V693H1133V696H1132V697H1131V695H1130V692H1129V696H1128V689H1127V694H1126V693H1125V691H1124V696H1123V694H1122V690H1121V696H1120V694H1119V693H1118V693H1117V690H1116V692H1115V690H1114V691H1113V692H1112V693H1111V692H1110V693H1109V694H1108V696H1107V691H1106V692H1105V692H1104V696H1103V692H1102V690H1101V697H1100V695H1099V690H1098V690H1097V693H1096V694H1095V695H1094V689H1093V692H1092V689H1091V689H1090V694H1089V690H1088V693H1087V693H1086V693H1085V690H1084V689H1083V692H1082V690H1081V688H1080V692H1079V691H1078V692H1077V689H1076V693H1075V695H1074V689H1073V693H1072V693H1071V695H1070V693H1069V693H1068V688H1067V693H1066V689H1065V690H1064V692H1063V695H1062V692H1061V689H1060V688H1059V691H1058V689H1057V691H1056V694H1055V692H1054V690H1053V694H1052V690H1051V688H1050V691H1049V694H1048V688H1047V689H1046V691H1045V688H1044V689H1043V691H1042V693H1041V690H1040V692H1039V691H1038V687H1037V688H1036V693H1035V692H1034V693H1033V688H1032V692H1031V692H1030V689H1029V690H1028V692H1027V689H1026V691H1025V692H1024V692H1023V690H1022V689H1021V692H1020V692H1019V690H1018V691H1017V693H1016V693H1015V687H1014V690H1013V692H1012V691H1011V693H1010V687H1009V688H1008V688H1007V689H1006V690H1005V690H1004V688H1003V687H1002V692H1001V692H1000V688H999V687H998V688H997V689H996V692H995V692H994V692H993V690H992V687H991V689H990V690H989V689H988V688H987V688H986V691H985V688H984V687H983V691H982V691H981V688H980V690H979V687H978V690H977V686H976V690H975V690H974V691H973V689H972V691H971V687H970V689H969V689H968V690H967V691H966V691H965V691H964V692H963V699H962V695H961V697H960V690H959V695H958V695H957V689H956V699H955V697H954V705H953V702H952V710H951V712H950V690H949V690H948V690H947V692H946V690H945V692H944V699H943V697H942V695H941V701H940V701H939V708H938V710H937V686H936V685H935V686H934V685H933V687H932V689H931V692H930V689H929V692H928V699H927V703H926V705H925V706H924V701H923V701H922V697H921V694H920V707H919V707H918V702H917V710H916V706H915V704H914V696H913V703H912V708H911V704H910V693H909V690H908V689H907V689H906V704H905V717H904V688H903V686H902V687H901V685H900V686H899V687H898V688H897V689H896V693H895V692H894V694H893V697H892V701H891V707H890V699H889V699H888V708H887V712H886V707H885V707H884V715H883V708H882V703H881V708H880V708H879V701H878V701H877V699H876V696H875V698H874V703H873V700H872V698H871V702H870V692H869V700H868V703H867V708H866V703H865V703H864V700H863V696H862V694H861V693H860V689H859V689H858V689H857V688H856V713H855V714H854V713H853V686H852V686H851V685H850V685H849V685H848V685H847V685H846V685H845V684H844V687H843V688H842V693H841V694H840V700H839V704H838V700H837V699H836V698H835V698H834V691H833V694H832V704H831V700H830V699H829V696H828V692H827V696H826V705H825V708H824V705H823V709H822V710H821V702H820V721H819V686H818V685H817V685H816V685H815V684H814V686H813V689H812V689H811V690H810V695H809V697H808V694H807V692H806V695H805V696H804V698H803V701H802V697H801V699H800V699H799V691H798V689H797V692H796V695H795V693H794V691H793V690H792V697H791V698H790V698H789V698H788V704H787V701H786V701H785V698H784V696H783V691H782V706H781V704H780V697H779V701H778V709H777V705H776V696H775V703H774V698H773V701H772V701H771V704H770V706H769V700H768V708H767V703H766V695H765V702H764V707H763V708H762V707H761V711H760V699H759V717H758V710H757V711H756V701H755V703H754V699H753V707H752V692H751V702H750V701H749V702H748V705H747V698H746V694H745V703H744V699H743V700H742V703H741V710H740V710H739V709H738V695H737V700H736V702H735V714H734V698H733V703H732V692H731V694H730V697H729V697H728V695H727V700H726V707H725V700H724V700H723V701H722V696H721V697H720V698H719V698H718V706H717V703H716V693H715V699H714V693H713V697H712V690H711V696H710V697H709V698H708V702H707V704H706V695H705V691H704V702H703V703H702V692H701V693H700V700H699V700H698V695H697V692H696V701H695V696H694V698H693V705H692V696H691V696H690V702H689V702H688V700H687V694H686V697H685V696H684V703H683V697H682V697H681V695H680V691H679V694H678V702H677V702H676V701H675V699H674V701H673V705H672V713H671V703H670V708H669V713H668V686H667V688H666V691H665V695H664V694H663V696H662V691H661V692H660V691H659V690H658V692H657V690H656V688H655V687H654V686H653V692H652V699H651V709H650V704H649V704H648V701H647V700H646V700H645V697H644V701H643V699H642V695H641V698H640V699H639V701H638V698H637V697H636V686H635V686H634V687H633V689H632V693H631V699H630V693H629V698H628V697H627V698H626V701H625V699H624V701H623V700H622V705H621V705H620V692H619V696H618V699H617V698H616V709H615V707H614V706H613V712H612V711H611V715H610V709H609V704H608V684H607V684H606V684H605V684H604V684H603V685H602V685H601V684H600V685H599V688H598V698H597V696H596V696H595V692H594V695H593V695H592V697H591V696H590V690H589V690H588V696H587V694H586V689H585V691H584V698H583V700H582V699H581V698H580V698H579V709H578V685H577V685H576V685H575V685H574V685H573V684H572V686H571V686H570V698H569V696H568V694H567V698H566V697H565V701H564V699H563V700H562V689H561V694H560V701H559V702H558V709H557V702H556V707H555V708H554V713H553V712H552V693H551V684H550V684H549V685H548V684H547V684H546V684H545V694H544V706H543V708H542V708H541V706H540V708H539V706H538V699H537V701H536V702H535V705H534V707H533V710H532V694H531V699H530V687H529V687H528V685H527V685H526V687H525V687H524V699H523V710H522V685H521V686H520V684H519V687H518V687H517V686H516V690H515V692H514V694H513V693H512V696H511V699H510V695H509V701H508V698H507V696H506V695H505V690H504V690H503V693H502V696H501V693H500V693H499V693H498V690H497V689H496V705H495V704H494V697H493V685H492V685H491V686H490V685H489V685H488V686H487V686H486V687H485V710H484V706H483V698H482V694H481V692H480V690H479V695H478V700H477V696H476V701H475V700H474V691H473V702H472V696H471V694H470V695H469V695H468V698H467V696H466V697H465V697H464V706H463V686H462V685H461V688H460V691H459V692H458V693H457V694H456V695H455V708H454V684H453V684H452V686H451V691H450V692H449V690H448V693H447V693H446V688H445V688H444V693H443V691H442V697H441V699H440V697H439V702H438V703H437V707H436V689H435V690H434V688H433V690H432V690H431V700H430V695H429V684H428V684H427V685H426V685H425V685H424V685H423V685H422V684H421V690H420V690H419V689H418V687H417V689H416V690H415V693H414V690H413V690H412V694H411V694H410V694H409V696H408V700H407V703H406V700H405V702H404V691H403V692H402V693H401V693H400V708H399V711H398V684H397V683H396V683H395V683H394V685H393V685H392V685H391V685H390V685H389V687H388V691H387V693H386V694H385V700H384V695H383V697H382V699H381V699H380V697H379V693H378V702H377V699H376V699H375V700H374V694H373V696H372V694H371V695H370V690H369V701H368V712H367V710H366V709H365V685H364V684H363V685H362V684H361V685H360V685H359V685H358V686H357V689H356V689H355V697H354V697H353V694H352V698H351V699H350V698H349V696H348V695H347V698H346V700H345V701H344V694H343V698H342V699H341V695H340V698H339V697H338V696H337V700H336V698H335V695H334V695H333V697H332V694H331V694H330V697H329V700H328V701H327V696H326V694H325V695H324V702H323V695H322V696H321V695H320V701H319V699H318V699H317V694H316V699H315V700H314V696H313V697H312V698H311V699H310V696H309V698H308V699H307V697H306V703H305V702H304V701H303V695H302V700H301V696H300V699H299V695H298V694H297V695H296V693H295V690H294V688H293V691H292V688H291V690H290V688H289V689H288V688H287V689H286V690H285V689H284V689H283V691H282V688H281V690H280V687H279V688H278V687H277V686H276V684H275V685H274V684H273V684H272V685H271V684H270V685H269V684H268V684H267V685H266V685H265V686H264V686H263V686H262V686H261V687H260V688H259V689H258V688H257V687H256V690H255V689H254V689H253V687H252V687H251V687H250V688H249V688H248V687H247V686H246V687H245V685H244V685H243V686H242V688H241V687H240V688H239V687H238V687H237V688H236V687H235V688H234V689H233V687H232V688H231V688H230V688H229V687H228V687H227V686H226V684H225V684H224V684H223V684H222V684H221V685H220V685H219V685H218V684H217V685H216V686H215V686H214V686H213V686H212V688H211V688H210V688H209V688H208V687H207V687H206V688H205V690H204V690H203V688H202V689H201V686H200V687H199V685H198V686H197V686H196V686H195V686H194V687H193V687H192V688H191V689H190V687H189V688H188V689H187V687H186V689H185V687H184V688H183V688H182V685H181V683H180V683H179V683H178V684H177V684H176V683H175V683H174V684H173V684H172V684H171V684H170V685H169V685H168V686H167V685H166V687H165V687H164V688H163V687H162V687H161V687H160V687H159V687H158V687H157V687H156V686H155V687H154V686H153V684H152V685H151V686H150V686H149V686H148V688H147V686H146V688H145V689H144V688H143V687H142V687H141V687H140V686H139V685H138V683H137V683H136V682H135V682H134V682H133Z" fill="#3232c8"/><path d="M133 681V681H134V681H135V681H136V681H137V681H138V681H139V680H140V680H141V679H142V679H143V679H144V679H145V679H146V679H147V679H148V679H149V679H150V679H151V680H152V680H153V680H154V680H155V679H156V679H157V679H158V679H159V679H160V679H161V679H162V679H163V679H164V679H165V679H166V679H167V680H168V680H169V680H170V680H171V681H172V681H173V681H174V681H175V681H176V681H177V681H178V681H179V681H180V681H181V680H182V680H183V679H184V679H185V679H186V679H187V679H188V679H189V679H190V679H191V679H192V679H193V679H194V679H195V679H196V679H197V679H198V680H199V679H200V679H201V679H202V679H203V679H204V679H205V679H206V679H207V679H208V679H209V679H210V679H211V679H212V679H213V679H214V680H215V680H216V680H217V680H218V680H219V680H220V680H221V680H222V681H223V681H224V681H225V681H226V680H227V680H228V679H229V679H230V679H231V679H232V679H233V679H234V679H235V679H236V679H237V679H238V679H239V679H240V679H241V679H242V679H243V680H244V680H245V680H246V679H247V679H248V679H249V679H250V679H251V679H252V679H253V679H254V679H255V679H256V679H257V679H258V679H259V679H260V679H261V679H262V679H263V679H264V680H265V680H266V680H267V680H268V680H269V680H270V680H271V680H272V680H273V680H274V680H275V680H276V680H277V679H278V679H279V679H280V679H281V679H282V679H283V679H284V678H285V678H286V678H287V678H288V679H289V678H290V678H291V678H292V678H293V678H294V678H295V678H296V677H297V676H298V676H299V676H300V676H301V676H302V675H303V675H304V675H305V675H306V675H307V676H308V676H309V676H310V676H311V676H312V676H313V676H314V676H315V676H316V676H317V675H318V676H319V676H320V676H321V675H322V676H323V675H324V675H325V675H326V675H327V675H328V675H329V676H330V676H331V676H332V676H333V676H334V676H335V676H336V676H337V676H338V676H339V676H340V676H341V676H342V676H343V676H344V676H345V676H346V675H347V675H348V675H349V675H350V675H351V675H352V676H353V676H354V676H355V677H356V678H357V678H358V679H359V680H360V680H361V680H362V680H363V680H364V681H365V678H366V676H367V675H368V676H369V677H370V678H371V678H372V678H373V678H374V678H375V677H376V677H377V678H378V677H379V677H380V677H381V678H382V678H383V678H384V678H385V678H386V678H387V679H388V679H389V680H390V680H391V681H392V681H393V681H394V681H395V681H396V681H397V681H398V677H399V676H400V677H401V677H402V678H403V677H404V678H405V677H406V677H407V677H408V678H409V678H410V678H411V679H412V679H413V679H414V679H415V679H416V679H417V679H418V679H419V679H420V679H421V680H422V680H423V681H424V681H425V681H426V681H427V681H428V681H429V679H430V678H431V679H432V679H433V679H434V679H435V679H436V678H437V677H438V677H439V677H440V678H441V678H442V678H443V678H444V679H445V679H446V679H447V679H448V679H449V679H450V679H451V680H452V680H453V680H454V678H455V678H456V678H457V678H458V679H459V679H460V679H461V680H462V680H463V678H464V677H465V677H466V677H467V678H468V678H469V678H470V678H471V677H472V677H473V677H474V678H475V678H476V678H477V678H478V678H479V678H480V678H481V678H482V678H483V676H484V676H485V679H486V679H487V680H488V680H489V680H490V680H491V680H492V681H493V679H494V678H495V677H496V678H497V678H498V679H499V679H500V679H501V678H502V677H503V676H504V677H505V678H506V678H507V678H508V678H509V678H510V678H511V678H512V678H513V678H514V679H515V679H516V679H517V679H518V680H519V680H520V680H521V680H522V678H523V677H524V678H525V679H526V680H527V680H528V680H529V680H530V679H531V678H532V677H533V676H534V676H535V676H536V677H537V677H538V677H539V676H540V677H541V677H542V676H543V677H544V677H545V680H546V679H547V680H548V680H549V681H550V681H551V679H552V677H553V676H554V675H555V675H556V675H557V675H558V675H559V676H560V676H561V677H562V677H563V677H564V677H565V677H566V678H567V678H568V678H569V678H570V679H571V680H572V680H573V680H574V681H575V681H576V681H577V681H578V678H579V678H580V678H581V678H582V678H583V678H584V678H585V678H586V678H587V678H588V678H589V678H590V678H591V678H592V678H593V678H594V678H595V678H596V678H597V678H598V678H599V679H600V680H601V680H602V681H603V681H604V681H605V681H606V681H607V681H608V678H609V677H610V676H611V675H612V675H613V676H614V676H615V676H616V676H617V676H618V676H619V676H620V676H621V677H622V677H623V677H624V677H625V677H626V677H627V677H628V678H629V678H630V678H631V678H632V679H633V679H634V679H635V680H636V679H637V678H638V678H639V678H640V677H641V677H642V677H643V677H644V677H645V677H646V677H647V677H648V677H649V676H650V676H651V676H652V677H653V678H654V679H655V679H656V679H657V679H658V679H659V678H660V678H661V678H662V678H663V678H664V679H665V679H666V679H667V680H668V677H669V676H670V675H671V674H672V675H673V676H674V676H675V677H676V677H677V677H678V678H679V678H680V678H681V678H682V677H683V677H684V677H685V677H686V678H687V678H688V678H689V678H690V678H691V677H692V677H693V677H694V677H695V677H696V677H697V677H698V677H699V678H700V677H701V678H702V677H703V677H704V678H705V677H706V677H707V677H708V677H709V678H710V677H711V677H712V678H713V677H714V677H715V677H716V677H717V677H718V677H719V677H720V677H721V677H722V677H723V677H724V677H725V677H726V677H727V677H728V677H729V677H730V677H731V677H732V677H733V677H734V675H735V676H736V676H737V676H738V676H739V676H740V676H741V676H742V676H743V676H744V675H745V676H746V675H747V675H748V675H749V676H750V676H751V676H752V676H753V676H754V676H755V676H756V676H757V674H758V674H759V675H760V675H761V675H762V675H763V676H764V676H765V676H766V676H767V676H768V676H769V676H770V676H771V676H772V676H773V676H774V676H775V676H776V676H777V676H778V676H779V677H780V676H781V676H782V677H783V677H784V677H785V677H786V677H787V677H788V677H789V677H790V677H791V677H792V678H793V678H794V678H795V678H796V679H797V679H798V679H799V678H800V678H801V678H802V678H803V678H804V678H805V678H806V678H807V678H808V678H809V678H810V678H811V679H812V679H813V680H814V680H815V680H816V680H817V680H818V681H819V676H820V676H821V676H822V677H823V676H824V677H825V676H826V677H827V677H828V677H829V677H830V676H831V677H832V677H833V677H834V677H835V676H836V677H837V677H838V677H839V677H840V678H841V678H842V679H843V679H844V680H845V680H846V680H847V680H848V680H849V680H850V681H851V680H852V681H853V677H854V675H855V675H856V677H857V678H858V679H859V679H860V678H861V677H862V677H863V676H864V677H865V676H866V676H867V676H868V677H869V676H870V677H871V677H872V677H873V677H874V677H875V676H876V676H877V676H878V676H879V676H880V676H881V675H882V675H883V675H884V675H885V675H886V675H887V676H888V676H889V676H890V677H891V677H892V677H893V677H894V678H895V678H896V679H897V679H898V679H899V679H900V679H901V680H902V679H903V680H904V676H905V677H906V678H907V679H908V679H909V679H910V678H911V677H912V677H913V677H914V677H915V677H916V676H917V677H918V677H919V677H920V677H921V677H922V677H923V677H924V677H925V677H926V677H927V676H928V677H929V677H930V678H931V679H932V679H933V680H934V680H935V680H936V680H937V677H938V677H939V677H940V677H941V677H942V678H943V678H944V678H945V678H946V679H947V679H948V679H949V680H950V677H951V676H952V676H953V676H954V677H955V677H956V678H957V678H958V678H959V678H960V678H961V677H962V677H963V678H964V678H965V678H966V679H967V679H968V678H969V679H970V679H971V679H972V679H973V679H974V679H975V679H976V679H977V679H978V679H979V679H980V679H981V679H982V679H983V679H984V679H985V678H986V678H987V679H988V678H989V678H990V678H991V678H992V679H993V678H994V679H995V678H996V679H997V678H998V678H999V678H1000V678H1001V678H1002V678H1003V678H1004V678H1005V678H1006V679H1007V679H1008V678H1009V678H1010V678H1011V679H1012V678H1013V678H1014V679H1015V678H1016V678H1017V678H1018V678H1019V678H1020V678H1021V678H1022V678H1023V678H1024V678H1025V678H1026V678H1027V678H1028V678H1029V678H1030V678H1031V678H1032V678H1033V678H1034V678H1035V678H1036V678H1037V678H1038V678H1039V678H1040V678H1041V678H1042V678H1043V678H1044V678H1045V678H1046V678H1047V678H1048V678H1049V678H1050V678H1051V678H1052V678H1053V678H1054V678H1055V678H1056V678H1057V678H1058V678H1059V678H1060V678H1061V678H1062V678H1063V678H1064V678H1065V678H1066V678H1067V678H1068V678H1069V678H1070V678H1071V678H1072V678H1073V678H1074V678H1075V678H1076V677H1077V678H1078V677H1079V677H1080V677H1081V677H1082V677H1083V677H1084V677H1085V677H1086V677H1087V677H1088V678H1089V678H1090V677H1091V677H1092V677H1093V677H1094V677H1095V677H1096V677H1097V677H1098V677H1099V677H1100V677H1101V677H1102V677H1103V677H1104V677H1105V677H1106V677H1107V677H1108V677H1109V677H1110V677H1111V677H1112V677H1113V677H1114V677H1115V677H1116V677H1117V677H1118V677H1119V677H1120V677H1121V677H1122V677H1123V677H1124V677H1125V677H1126V677H1127V677H1128V677H1129V677H1130V677H1131V677H1132V677H1133V677H1134V677H1135V677H1136V677H1137V677H1138V677H1139V677H1140V677H1141V677H1142V677H1143V677H1144V677H1145V677H1146V677H1147V677H1148V677H1149V677H1150V677H1151V677H1152V677H1153V677H1154V677H1155V677H1156V677H1157V677H1158V677H1159V677H1160V677H1161V677H1162V677H1163V677H1164V677H1165V677H1166V677H1167V677H1168V677H1169V677H1170V677H1171V677H1172V677H1173V677H1174V677H1175V677H1176V677H1177V677H1178V677H1179V678H1180V678H1181V677H1182V677H1183V677H1184V677H1185V677H1186V678H1187V677H1188V678H1189V677H1190V678H1191V677H1192V678H1193V677H1194V678H1195V678H1196V677H1197V678H1198V678H1199V678H1200V678H1201V678H1202V678H1203V678H1204V678H1205V678H1206V678H1207V678H1208V678H1209V678H1210V678H1211V678H1212V679H1213V679H1214V679H1215V679H1216V679H1217V679H1218V679H1219V679H1220V679H1221V679H1222V679H1223V679H1224V679H1225V679H1226V679H1227V679H1228V679H1229V680H1230V680H1231V680H1232V680H1233V680H1234V680H1235V680H1236V680H1237V680H1238V680H1239V681H1240V681H1241V681H1242V681H1243V681H1244V681H1245V681H1246V681H1247V682H1246V682H1245V682H1244V682H1243V682H1242V682H1241V682H1240V682H1239V683H1238V683H1237V683H1236V683H1235V683H1234V683H1233V683H1232V683H1231V683H1230V683H1229V684H1228V684H1227V684H1226V684H1225V684H1224V684H1223V684H1222V684H1221V684H1220V684H1219V684H1218V684H1217V684H1216V684H1215V684H1214V684H1213V684H1212V685H1211V685H1210V685H1209V685H1208V685H1207V685H1206V685H1205V685H1204V685H1203V685H1202V685H1201V685H1200V685H1199V685H1198V685H1197V686H1196V685H1195V685H1194V686H1193V685H1192V686H1191V685H1190V686H1189V685H1188V686H1187V685H1186V686H1185V686H1184V686H1183V686H1182V686H1181V685H1180V685H1179V686H1178V686H1177V686H1176V686H1175V686H1174V686H1173V686H1172V686H1171V686H1170V686H1169V686H1168V686H1167V686H1166V686H1165V686H1164V686H1163V686H1162V686H1161V686H1160V686H1159V686H1158V686H1157V686H1156V686H1155V686H1154V686H1153V686H1152V686H1151V686H1150V686H1149V686H1148V686H1147V686H1146V686H1145V686H1144V686H1143V686H1142V686H1141V686H1140V686H1139V686H1138V686H1137V686H1136V686H1135V686H1134V686H1133V686H1132V686H1131V686H1130V686H1129V686H1128V686H1127V686H1126V686H1125V686H1124V686H1123V686H1122V686H1121V686H1120V686H1119V686H1118V686H1117V686H1116V686H1115V686H1114V686H1113V686H1112V686H1111V686H1110V686H1109V686H1108V686H1107V686H1106V686H1105V686H1104V686H1103V686H1102V686H1101V686H1100V686H1099V686H1098V686H1097V686H1096V686H1095V686H1094V686H1093V686H1092V686H1091V686H1090V685H1089V685H1088V686H1087V686H1086V686H1085V686H1084V686H1083V686H1082V686H1081V686H1080V686H1079V686H1078V685H1077V686H1076V685H1075V685H1074V685H1073V685H1072V685H1071V685H1070V685H1069V685H1068V685H1067V685H1066V685H1065V685H1064V685H1063V685H1062V685H1061V685H1060V685H1059V685H1058V685H1057V685H1056V685H1055V685H1054V685H1053V685H1052V685H1051V685H1050V685H1049V685H1048V685H1047V685H1046V685H1045V685H1044V685H1043V685H1042V685H1041V685H1040V685H1039V685H1038V685H1037V685H1036V685H1035V685H1034V685H1033V685H1032V685H1031V685H1030V685H1029V685H1028V685H1027V685H1026V685H1025V685H1024V685H1023V685H1022V685H1021V685H1020V685H1019V685H1018V685H1017V685H1016V685H1015V684H1014V685H1013V685H1012V684H1011V685H1010V685H1009V685H1008V684H1007V684H1006V685H1005V685H1004V685H1003V685H1002V685H1001V685H1000V685H999V685H998V685H997V684H996V685H995V684H994V685H993V684H992V685H991V685H990V685H989V685H988V684H987V685H986V685H985V684H984V684H983V684H982V684H981V684H980V684H979V684H978V684H977V684H976V684H975V684H974V684H973V684H972V684H971V684H970V684H969V685H968V684H967V684H966V685H965V685H964V685H963V686H962V686H961V685H960V685H959V685H958V685H957V685H956V686H955V686H954V687H953V687H952V687H951V686H950V683H949V684H948V684H947V684H946V685H945V685H944V685H943V685H942V686H941V686H940V686H939V686H938V686H937V683H936V683H935V683H934V683H933V684H932V684H931V685H930V686H929V686H928V687H927V686H926V686H925V686H924V686H923V686H922V686H921V686H920V686H919V686H918V686H917V687H916V686H915V686H914V686H913V686H912V686H911V685H910V684H909V684H908V684H907V685H906V686H905V687H904V683H903V684H902V683H901V684H900V684H899V684H898V684H897V684H896V685H895V685H894V686H893V686H892V686H891V686H890V687H889V687H888V687H887V688H886V688H885V688H884V688H883V688H882V688H881V687H880V687H879V687H878V687H877V687H876V687H875V686H874V686H873V686H872V686H871V686H870V687H869V686H868V687H867V687H866V687H865V686H864V687H863V686H862V686H861V685H860V684H859V684H858V685H857V686H856V688H855V688H854V686H853V682H852V683H851V682H850V683H849V683H848V683H847V683H846V683H845V683H844V684H843V684H842V685H841V685H840V686H839V686H838V686H837V686H836V687H835V686H834V686H833V686H832V686H831V687H830V686H829V686H828V686H827V686H826V687H825V686H824V687H823V686H822V687H821V687H820V687H819V682H818V683H817V683H816V683H815V683H814V683H813V684H812V684H811V685H810V685H809V685H808V685H807V685H806V685H805V685H804V685H803V685H802V685H801V685H800V685H799V684H798V684H797V684H796V685H795V685H794V685H793V685H792V686H791V686H790V686H789V686H788V686H787V686H786V686H785V686H784V686H783V686H782V687H781V687H780V686H779V687H778V687H777V687H776V687H775V687H774V687H773V687H772V687H771V687H770V687H769V687H768V687H767V687H766V687H765V687H764V687H763V688H762V688H761V688H760V688H759V689H758V689H757V687H756V687H755V687H754V687H753V687H752V687H751V687H750V687H749V688H748V688H747V688H746V687H745V688H744V687H743V687H742V687H741V687H740V687H739V687H738V687H737V687H736V687H735V688H734V686H733V686H732V686H731V686H730V686H729V686H728V686H727V686H726V686H725V686H724V686H723V686H722V686H721V686H720V686H719V686H718V686H717V686H716V686H715V686H714V686H713V685H712V686H711V686H710V685H709V686H708V686H707V686H706V686H705V685H704V686H703V686H702V685H701V686H700V685H699V686H698V686H697V686H696V686H695V686H694V686H693V686H692V686H691V685H690V685H689V685H688V685H687V685H686V686H685V686H684V686H683V686H682V685H681V685H680V685H679V685H678V686H677V686H676V686H675V687H674V687H673V688H672V689H671V688H670V687H669V686H668V683H667V684H666V684H665V684H664V685H663V685H662V685H661V685H660V685H659V684H658V684H657V684H656V684H655V684H654V685H653V686H652V687H651V687H650V687H649V686H648V686H647V686H646V686H645V686H644V686H643V686H642V686H641V686H640V685H639V685H638V685H637V684H636V683H635V684H634V684H633V684H632V685H631V685H630V685H629V685H628V686H627V686H626V686H625V686H624V686H623V686H622V686H621V687H620V687H619V687H618V687H617V687H616V687H615V687H614V687H613V688H612V688H611V687H610V686H609V685H608V682H607V682H606V682H605V682H604V682H603V682H602V683H601V683H600V684H599V685H598V685H597V685H596V685H595V685H594V685H593V685H592V685H591V685H590V685H589V685H588V685H587V685H586V685H585V685H584V685H583V685H582V685H581V685H580V685H579V685H578V682H577V682H576V682H575V682H574V683H573V683H572V683H571V684H570V685H569V685H568V685H567V685H566V686H565V686H564V686H563V686H562V686H561V687H560V687H559V688H558V688H557V688H556V688H555V688H554V687H553V686H552V684H551V682H550V682H549V683H548V683H547V684H546V683H545V686H544V686H543V687H542V686H541V686H540V687H539V686H538V686H537V686H536V687H535V687H534V687H533V686H532V685H531V684H530V683H529V683H528V683H527V683H526V684H525V685H524V686H523V685H522V683H521V683H520V683H519V683H518V684H517V684H516V684H515V684H514V685H513V685H512V685H511V685H510V685H509V685H508V685H507V685H506V685H505V686H504V687H503V686H502V685H501V684H500V684H499V684H498V685H497V685H496V686H495V685H494V684H493V682H492V683H491V683H490V683H489V683H488V683H487V684H486V684H485V687H484V687H483V685H482V685H481V685H480V685H479V685H478V685H477V685H476V685H475V685H474V686H473V686H472V686H471V685H470V685H469V685H468V685H467V686H466V686H465V686H464V685H463V683H462V683H461V684H460V684H459V684H458V685H457V685H456V685H455V685H454V683H453V683H452V683H451V684H450V684H449V684H448V684H447V684H446V684H445V684H444V685H443V685H442V685H441V685H440V686H439V686H438V686H437V685H436V684H435V684H434V684H433V684H432V684H431V685H430V684H429V682H428V682H427V682H426V682H425V682H424V682H423V683H422V683H421V684H420V684H419V684H418V684H417V684H416V684H415V684H414V684H413V684H412V684H411V685H410V685H409V685H408V686H407V686H406V686H405V685H404V686H403V685H402V686H401V686H400V687H399V686H398V682H397V682H396V682H395V682H394V682H393V682H392V682H391V683H390V683H389V684H388V684H387V685H386V685H385V685H384V685H383V685H382V685H381V686H380V686H379V686H378V685H377V686H376V686H375V685H374V685H373V685H372V685H371V685H370V686H369V687H368V688H367V687H366V685H365V682H364V683H363V683H362V683H361V683H360V683H359V684H358V685H357V685H356V686H355V687H354V687H353V687H352V688H351V688H350V688H349V688H348V688H347V688H346V687H345V687H344V687H343V687H342V687H341V687H340V687H339V687H338V687H337V687H336V687H335V687H334V687H333V687H332V687H331V687H330V687H329V688H328V688H327V688H326V688H325V688H324V688H323V687H322V688H321V687H320V687H319V687H318V688H317V687H316V687H315V687H314V687H313V687H312V687H311V687H310V687H309V687H308V687H307V688H306V688H305V688H304V688H303V688H302V687H301V687H300V687H299V687H298V687H297V686H296V685H295V685H294V685H293V685H292V685H291V685H290V685H289V684H288V685H287V685H286V685H285V685H284V684H283V684H282V684H281V684H280V684H279V684H278V684H277V683H276V683H275V683H274V683H273V683H272V683H271V683H270V683H269V683H268V683H267V683H266V683H265V683H264V684H263V684H262V684H261V684H260V684H259V684H258V684H257V684H256V684H255V684H254V684H253V684H252V684H251V684H250V684H249V684H248V684H247V684H246V683H245V683H244V683H243V684H242V684H241V684H240V684H239V684H238V684H237V684H236V684H235V684H234V684H233V684H232V684H231V684H230V684H229V684H228V683H227V683H226V682H225V682H224V682H223V682H222V683H221V683H220V683H219V683H218V683H217V683H216V683H215V683H214V684H213V684H212V684H211V684H210V684H209V684H208V684H207V684H206V684H205V684H204V684H203V684H202V684H201V684H200V684H199V683H198V684H197V684H196V684H195V684H194V684H193V684H192V684H191V684H190V684H189V684H188V684H187V684H186V684H185V684H184V684H183V683H182V683H181V682H180V682H179V682H178V682H177V682H176V682H175V682H174V682H173V682H172V682H171V683H170V683H169V683H168V683H167V684H166V684H165V684H164V684H163V684H162V684H161V684H160V684H159V684H158V684H157V684H156V684H155V683H154V683H153V683H152V683H151V684H150V684H149V684H148V684H147V684H146V684H145V684H144V684H143V684H142V684H141V683H140V683H139V682H138V682H137V682H136V682H135V682H134V682H133Z" fill="#6464dc"/>
</svg>
<!-- scrollbar -->
<div class="abs" style="left:1263px;top:155px;width:1px;height:722px;background:#c4c4c4"></div>
<div class="abs" style="left:1264px;top:155px;width:13px;height:722px;background:#f0f0f0;border-left:1px solid #fff"></div>
<div class="abs" style="left:1265px;top:172px;width:12px;height:705px;background:linear-gradient(90deg,#fbfbfb 0,#f2f2f3 35%,#e0e0e3 60%,#c6c6cb 100%);border-left:1px solid #9c9c9c;border-top:1px solid #9c9c9c"></div>
<svg class="abs" style="left:1265px;top:155px" width="12" height="17" viewBox="0 0 12 17"><path d="M3.800 11.200 l3.700 -4.200 l3.700 4.200z" fill="#484848"/></svg>
<svg class="abs" style="left:1267px;top:519px" width="10" height="12" viewBox="0 0 10 12"><path d="M1.500 2.500h6.500M1.500 5.500h6.500M1.500 8.500h6.500" stroke="#585858"/><path d="M1.500 3.500h6.500M1.500 6.500h6.500M1.500 9.500h6.500" stroke="#fff"/></svg>
<!-- menu -->
<div id="menu">
<div class="gut"></div>
<div class="it" style="top:2px">Создать проект</div><div class="sc" style="top:2px">Ctrl+N</div>
<div class="it" style="top:24px">Открыть...</div><div class="sc" style="top:24px">Ctrl+O</div>
<div class="it" style="top:46px">Недавние файлы</div><div class="arr" style="top:53px"></div>
<div class="sep" style="top:72px"></div>
<div class="it" style="top:76px">Закрыть</div><div class="sc" style="top:76px">Ctrl+W</div>
<div class="it" style="top:98px">Сохранить проект</div><div class="sc" style="top:98px">Ctrl+S</div>
<div class="it" style="top:120px">Сохранить проект как...</div>
<div class="it" style="top:142px">Сохранить сжатую копию проекта...</div>
<div class="it" style="top:164px">Проверить зависимости...</div>
<div class="sep" style="top:190px"></div>
<div class="it" style="top:194px">Edit Metadata...</div>
<div class="sep" style="top:220px"></div>
<div class="it" style="top:224px">Импортировать</div><div class="arr" style="top:231px"></div>
<div class="sep" style="top:250px"></div>
<div class="it" style="top:254px">Экспортировать...</div><div class="sc" style="top:254px">Ctrl+Shift+E</div>
<div class="it" style="top:276px">Экспортировать выделенное...</div>
<div class="sep" style="top:302px"></div>
<div class="it dis" style="top:306px">Экспортировать пометки...</div>
<div class="it" style="top:328px">Экспортировать в несколько файлов...</div><div class="sc" style="top:328px">Ctrl+Shift+L</div>
<div class="it dis" style="top:350px">Экспортировать MIDI...</div>
<div class="it" style="top:372px">Применить цепочку...</div>
<div class="it" style="top:394px">Изменить цепочки...</div>
<div class="sep" style="top:420px"></div>
<div class="it" style="top:424px">Параметры страницы...</div>
<div class="it" style="top:446px">Печать...</div>
<div class="sep" style="top:472px"></div>
<div class="it" style="top:476px">Выход</div><div class="sc" style="top:476px">Ctrl+Q</div>
</div>
<!-- red annotations -->
<svg class="abs" style="left:0;top:0" width="1277" height="877" viewBox="0 0 1277 877">
<rect x="-4" y="21.500" width="47.400" height="21.700" rx="3.500" fill="none" stroke="#f00" stroke-width="3.200"/>
<rect x="25.500" y="295.400" width="113" height="23.800" rx="3" fill="none" stroke="#f00" stroke-width="3.100"/>
<path d="M44 41.500 L273.500 222.300" stroke="#f00" stroke-width="3"/>
<path d="M138.500 295 L273.500 222.300" stroke="#f00" stroke-width="3"/>
<circle cx="294.750" cy="222.500" r="21.100" fill="none" stroke="#f00" stroke-width="2.900"/>
<text x="294" y="233" font-family="Liberation Sans, sans-serif" font-size="31" fill="#f00" text-anchor="middle">1</text>
</svg>
</body>
</html>
